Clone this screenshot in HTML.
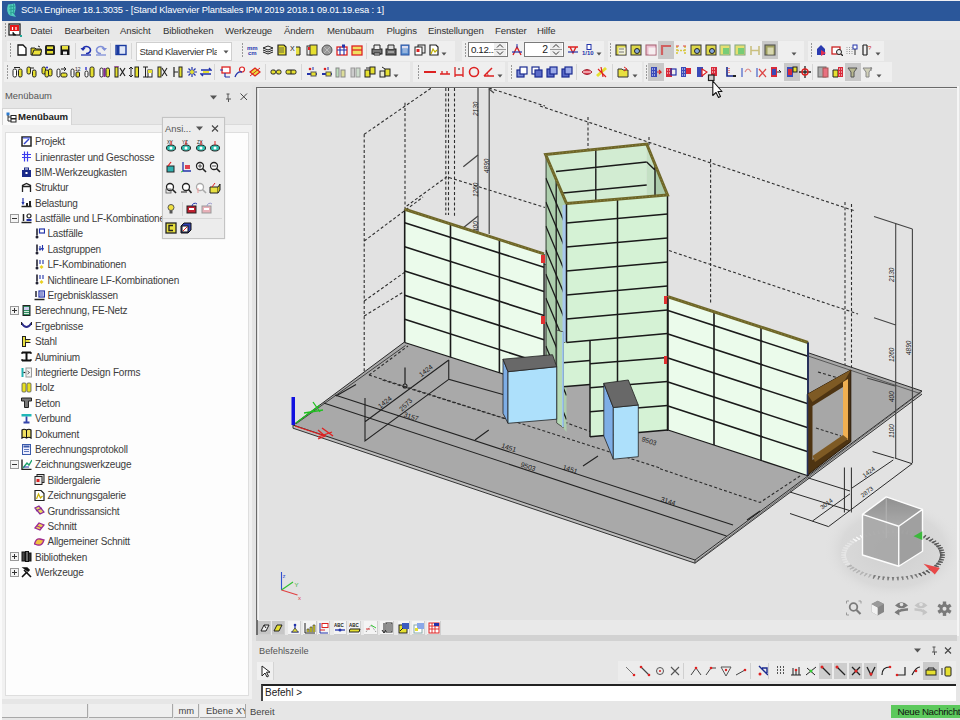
<!DOCTYPE html>
<html><head><meta charset="utf-8"><style>
*{box-sizing:border-box}
html,body{margin:0;padding:0;width:960px;height:720px;overflow:hidden;background:#e6e6e6;font-family:"Liberation Sans",sans-serif;color:#333}
.a{position:absolute}
.tb{background:#efefef;height:20px}
.tt{font-size:10px;letter-spacing:-0.2px;color:#3c3c3c;white-space:nowrap;line-height:12px}
</style></head><body>
<div class="a" style="left:0;top:0;width:960px;height:1px;background:#f0f0f4"></div>
<div class="a" style="left:0;top:0;width:2px;height:720px;background:#fafafa"></div>
<div class="a" style="left:2px;top:1px;width:958px;height:20px;background:#2b579a"></div>
<svg class="a" style="left:4px;top:3px" width="14" height="15" viewBox="0 0 14 15"><path d="M4 1.5 L11 0.5 Q12.5 7 10 11 L12 14 L6 12.5 Q1.5 9 4 1.5Z" fill="#52cdbd"/><path d="M5 4 L11 3 M5 7 L11.5 6 M6 10 L10.5 9 M7 1.5 V12 M9.5 1 V11" stroke="#2a9f92" stroke-width="0.9"/></svg>
<div class="a" style="left:21px;top:4px;font-size:9.4px;letter-spacing:-0.17px;color:#fff;white-space:nowrap;line-height:12px">SCIA Engineer 18.1.3035 - [Stand Klavervier Plantsales IPM 2019 2018.1 09.01.19.esa : 1]</div>
<div class="a" style="left:2px;top:21px;width:958px;height:19px;background:#e8e8e8"></div>
<div class="a" style="left:5px;top:23px;width:1px;height:1.5px;background:#999"></div><div class="a" style="left:5px;top:26px;width:1px;height:1.5px;background:#999"></div><div class="a" style="left:5px;top:29px;width:1px;height:1.5px;background:#999"></div><div class="a" style="left:5px;top:32px;width:1px;height:1.5px;background:#999"></div><div class="a" style="left:5px;top:35px;width:1px;height:1.5px;background:#999"></div>
<svg class="a" style="left:8px;top:23px" width="14" height="15" viewBox="0 0 14 15"><rect x="1" y="1" width="11" height="11" fill="#fff" stroke="#222" stroke-width="1.3"/><rect x="2" y="2" width="9" height="6" fill="#e81818"/><path d="M4.5 4v3M8 4v3" stroke="#fff" stroke-width="1.2"/><path d="M5 9v3h3" stroke="#222"/><rect x="12" y="12" width="2" height="2" fill="#2a9"/></svg>
<div class="a" style="left:30.5px;top:25px;font-size:9.6px;letter-spacing:-0.15px;color:#333;white-space:nowrap;line-height:12px">Datei</div>
<div class="a" style="left:64.5px;top:25px;font-size:9.6px;letter-spacing:-0.15px;color:#333;white-space:nowrap;line-height:12px">Bearbeiten</div>
<div class="a" style="left:120px;top:25px;font-size:9.6px;letter-spacing:-0.15px;color:#333;white-space:nowrap;line-height:12px">Ansicht</div>
<div class="a" style="left:163px;top:25px;font-size:9.6px;letter-spacing:-0.15px;color:#333;white-space:nowrap;line-height:12px">Bibliotheken</div>
<div class="a" style="left:225px;top:25px;font-size:9.6px;letter-spacing:-0.15px;color:#333;white-space:nowrap;line-height:12px">Werkzeuge</div>
<div class="a" style="left:284px;top:25px;font-size:9.6px;letter-spacing:-0.15px;color:#333;white-space:nowrap;line-height:12px">Ändern</div>
<div class="a" style="left:327px;top:25px;font-size:9.6px;letter-spacing:-0.15px;color:#333;white-space:nowrap;line-height:12px">Menübaum</div>
<div class="a" style="left:386.5px;top:25px;font-size:9.6px;letter-spacing:-0.15px;color:#333;white-space:nowrap;line-height:12px">Plugins</div>
<div class="a" style="left:428px;top:25px;font-size:9.6px;letter-spacing:-0.15px;color:#333;white-space:nowrap;line-height:12px">Einstellungen</div>
<div class="a" style="left:495px;top:25px;font-size:9.6px;letter-spacing:-0.15px;color:#333;white-space:nowrap;line-height:12px">Fenster</div>
<div class="a" style="left:537px;top:25px;font-size:9.6px;letter-spacing:-0.15px;color:#333;white-space:nowrap;line-height:12px">Hilfe</div>
<div class="a tb" style="left:7px;top:41px;width:448px"></div>
<div class="a tb" style="left:462px;top:41px;width:142px"></div>
<div class="a tb" style="left:608px;top:41px;width:196px"></div>
<div class="a tb" style="left:808px;top:41px;width:76px"></div>
<div class="a tb" style="left:4px;top:62px;width:406px"></div>
<div class="a tb" style="left:413px;top:62px;width:92px"></div>
<div class="a tb" style="left:508px;top:62px;width:134px"></div>
<div class="a tb" style="left:644px;top:62px;width:248px"></div>
<div class="a" style="left:10px;top:43px;width:1px;height:1.5px;background:#999"></div><div class="a" style="left:10px;top:46px;width:1px;height:1.5px;background:#999"></div><div class="a" style="left:10px;top:49px;width:1px;height:1.5px;background:#999"></div><div class="a" style="left:10px;top:52px;width:1px;height:1.5px;background:#999"></div><div class="a" style="left:10px;top:55px;width:1px;height:1.5px;background:#999"></div>
<svg class="a" style="left:16px;top:44px" width="12" height="12" ><path d="M2 1h5l3 3v7H2z" fill="#fff" stroke="#111" stroke-width="1.3"/></svg>
<svg class="a" style="left:30px;top:44px" width="12" height="12" ><path d="M1 4h4l1 1h5v6H1z" fill="#d9cf1e" stroke="#222"/><path d="M2 11l2-5h8l-2 5z" fill="#ede23a" stroke="#222"/><path d="M8 2l2 1" stroke="#222"/></svg>
<svg class="a" style="left:44px;top:44px" width="12" height="12" ><rect x="1" y="1" width="10" height="10" rx="1.5" fill="#222"/><rect x="3" y="2.5" width="6" height="2.5" fill="#e6e030"/><rect x="3" y="7" width="6" height="2.5" fill="#e6e030"/></svg>
<svg class="a" style="left:59px;top:44px" width="12" height="12" ><rect x="1.5" y="1.5" width="9" height="9.5" fill="#111"/><rect x="3" y="2" width="6" height="3.5" fill="#e8e040"/><rect x="4" y="7.5" width="4" height="3" fill="#eee"/></svg>
<div class="a" style="left:75px;top:43px;width:1px;height:16px;background:#d6d6d6"></div>
<svg class="a" style="left:80px;top:44px" width="12" height="12" ><path d="M2.5 6 A4 3.5 0 1 1 6 9.5" fill="none" stroke="#2030b0" stroke-width="1.6"/><path d="M0.5 4l2.5 3 2.5-3" fill="#2030b0"/><path d="M1 11h10" stroke="#2030b0" stroke-width="1.3"/></svg>
<svg class="a" style="left:95px;top:44px" width="12" height="12" ><path d="M9.5 6 A4 3.5 0 1 0 6 9.5" fill="none" stroke="#8090d8" stroke-width="1.6"/><path d="M6.5 4l3 3 2.5-3" fill="#8090d8"/><path d="M1 11h10" stroke="#8090d8" stroke-width="1.3"/></svg>
<div class="a" style="left:110px;top:43px;width:1px;height:16px;background:#d6d6d6"></div>
<svg class="a" style="left:115px;top:44px" width="12" height="12" ><rect x="1" y="1.5" width="10" height="9" fill="#dfe6f6" stroke="#1a3aa0" stroke-width="1.4"/><rect x="1.5" y="2" width="3" height="8" fill="#1a3aa0"/></svg>
<div class="a" style="left:131px;top:43px;width:1px;height:16px;background:#d6d6d6"></div>
<div class="a" style="left:136px;top:42px;width:96px;height:19px;background:#fff;border:1px solid #cfcfcf;font-size:9.6px;letter-spacing:-0.38px;line-height:17px;padding-left:2.5px;white-space:nowrap;overflow:hidden;color:#333">Stand Klavervier Pla</div>
<div class="a" style="left:217px;top:43px;width:14px;height:17px;background:#fff"></div>
<svg class="a" style="left:223px;top:50px" width="6" height="4" ><path d="M0.5 0.5 L3 3.5 L5.5 0.5Z" fill="#555"/></svg>
<div class="a" style="left:242px;top:43px;width:1px;height:1.5px;background:#999"></div><div class="a" style="left:242px;top:46px;width:1px;height:1.5px;background:#999"></div><div class="a" style="left:242px;top:49px;width:1px;height:1.5px;background:#999"></div><div class="a" style="left:242px;top:52px;width:1px;height:1.5px;background:#999"></div><div class="a" style="left:242px;top:55px;width:1px;height:1.5px;background:#999"></div>
<svg class="a" style="left:247px;top:44px" width="12" height="12" ><text x="0" y="5.5" font-size="6" fill="#2a3ab0" font-family="Liberation Sans" font-weight="bold">mm</text><text x="1" y="11" font-size="6" fill="#2a3ab0" font-family="Liberation Sans" font-weight="bold">cm</text></svg>
<svg class="a" style="left:262px;top:44px" width="12" height="12" ><path d="M1 8l5 2 5-2M1 6l5 2 5-2M1 4l5 2 5-2-5-2z" fill="#eee" stroke="#222"/></svg>
<svg class="a" style="left:276px;top:44px" width="12" height="12" ><path d="M2 1h6l2 2v8H2z" fill="#e6df30" stroke="#222" stroke-width="1.2"/><path d="M3 4h5M3 6h5M3 8h5" stroke="#444" stroke-width="0.8"/></svg>
<svg class="a" style="left:290px;top:44px" width="12" height="12" ><text x="0" y="7" font-size="7" fill="#222" font-family="Liberation Sans">X</text><path d="M6 3h4v8H6" fill="#e8e040" stroke="#222"/></svg>
<svg class="a" style="left:306px;top:44px" width="12" height="12" ><rect x="1" y="2" width="5" height="9" fill="#eee" stroke="#333"/><rect x="4" y="1" width="7" height="10" fill="#e6df30" stroke="#333"/><rect x="2" y="3" width="2" height="3" fill="#d22"/></svg>
<svg class="a" style="left:321px;top:44px" width="12" height="12" ><circle cx="6" cy="6" r="5" fill="#999" stroke="#555"/><path d="M3 3l6 6M3 9l6-6" stroke="#bbb"/></svg>
<svg class="a" style="left:336px;top:44px" width="12" height="12" ><rect x="1" y="3" width="10" height="8" fill="#fff" stroke="#d22" stroke-width="1.3"/><path d="M1 6h10M4 3v8M8 3v8" stroke="#2233aa" stroke-width="1.1"/><rect x="6" y="0.5" width="3" height="3" fill="#2233aa"/></svg>
<svg class="a" style="left:351px;top:44px" width="12" height="12" ><rect x="1" y="2" width="10" height="9" fill="#f0e060" stroke="#d22" stroke-width="1.3"/><path d="M1 6h10" stroke="#d22" stroke-width="1.3"/></svg>
<div class="a" style="left:366px;top:43px;width:1px;height:16px;background:#d6d6d6"></div>
<svg class="a" style="left:371px;top:44px" width="12" height="12" ><rect x="1" y="5" width="10" height="5" fill="#777" stroke="#222"/><path d="M3 5V1h6v4M3 9h6v2H3z" fill="#eee" stroke="#222"/></svg>
<svg class="a" style="left:385px;top:44px" width="12" height="12" ><rect x="1" y="5" width="10" height="6" fill="#666" stroke="#222"/><path d="M3 5V1h6v4" fill="#ddd" stroke="#222"/><path d="M3 8h6" stroke="#ddd"/></svg>
<svg class="a" style="left:399px;top:44px" width="12" height="12" ><rect x="2" y="1" width="8" height="10" fill="#5a90d0" stroke="#2a50a0"/><rect x="3" y="2" width="6" height="2.5" fill="#dde"/><path d="M3.5 6h5M3.5 8h5" stroke="#dde" stroke-width="0.9"/></svg>
<svg class="a" style="left:414px;top:44px" width="12" height="12" ><rect x="4" y="1" width="7" height="8" fill="#eee" stroke="#222"/><rect x="1" y="3" width="7" height="8" fill="#fff" stroke="#222"/><rect x="2.5" y="5" width="3" height="3" fill="#d22"/></svg>
<svg class="a" style="left:428px;top:44px" width="12" height="12" ><path d="M2 1h6l2 2v8H2z" fill="#fff" stroke="#222" stroke-width="1.2"/><path d="M3 10l2-5 2 3 2-2" stroke="#c0b000" stroke-width="1.2" fill="none"/></svg>
<svg class="a" style="left:441px;top:52px" width="6" height="4" ><path d="M0.5 0.5 L3 3.5 L5.5 0.5Z" fill="#555"/></svg>
<div class="a" style="left:465px;top:43px;width:1px;height:1.5px;background:#999"></div><div class="a" style="left:465px;top:46px;width:1px;height:1.5px;background:#999"></div><div class="a" style="left:465px;top:49px;width:1px;height:1.5px;background:#999"></div><div class="a" style="left:465px;top:52px;width:1px;height:1.5px;background:#999"></div><div class="a" style="left:465px;top:55px;width:1px;height:1.5px;background:#999"></div>
<div class="a" style="left:468px;top:42px;width:40px;height:15px;background:#fff;border:1px solid #7a7a7a;font-size:9.8px;line-height:13px;padding-left:2px;color:#222;letter-spacing:-0.4px;white-space:nowrap">0.12...</div>
<svg class="a" style="left:494px;top:43px" width="12" height="13" ><rect x="0" y="0" width="12" height="13" fill="#eee"/><path d="M3 4.5l3-3 3 3M3 8.5l3 3 3-3" stroke="#333" fill="none"/><path d="M0 6.5h12" stroke="#999"/></svg>
<svg class="a" style="left:511px;top:44px" width="12" height="12" ><path d="M2 11L6 3l4 8" fill="none" stroke="#d22" stroke-width="1.4"/><path d="M1 8h10" stroke="#2233aa" stroke-width="1.2"/><path d="M6 0v4" stroke="#2233aa"/></svg>
<div class="a" style="left:524px;top:42px;width:40px;height:15px;background:#fff;border:1px solid #7a7a7a;font-size:10.4px;line-height:13px;padding-right:15px;text-align:right;color:#222">2</div>
<svg class="a" style="left:550px;top:43px" width="12" height="13" ><rect x="0" y="0" width="12" height="13" fill="#eee"/><path d="M3 4.5l3-3 3 3M3 8.5l3 3 3-3" stroke="#333" fill="none"/><path d="M0 6.5h12" stroke="#999"/></svg>
<svg class="a" style="left:567px;top:44px" width="12" height="12" ><path d="M1 3h10M3 3l3 6 3-6" fill="none" stroke="#d22" stroke-width="1.4"/><path d="M1 8h10" stroke="#2233aa" stroke-width="1.2"/></svg>
<svg class="a" style="left:582px;top:44px" width="12" height="12" ><text x="0" y="11" font-size="6" fill="#2233aa" font-family="Liberation Sans" font-weight="bold">1/10</text><rect x="5" y="0.5" width="4" height="5" fill="#fff" stroke="#2233aa"/></svg>
<svg class="a" style="left:596px;top:52px" width="6" height="4" ><path d="M0.5 0.5 L3 3.5 L5.5 0.5Z" fill="#555"/></svg>
<div class="a" style="left:610px;top:43px;width:1px;height:1.5px;background:#999"></div><div class="a" style="left:610px;top:46px;width:1px;height:1.5px;background:#999"></div><div class="a" style="left:610px;top:49px;width:1px;height:1.5px;background:#999"></div><div class="a" style="left:610px;top:52px;width:1px;height:1.5px;background:#999"></div><div class="a" style="left:610px;top:55px;width:1px;height:1.5px;background:#999"></div>
<svg class="a" style="left:615px;top:44px" width="12" height="12" ><rect x="1" y="1" width="10" height="10" fill="#ddd84a" stroke="#333" stroke-width="1.1"/><rect x="3.5" y="3.5" width="7" height="7" fill="#f2f2e0"/><path d="M4 5h5M4 8h5" stroke="#555" stroke-width="0.8"/></svg>
<svg class="a" style="left:630px;top:44px" width="12" height="12" ><rect x="1" y="1" width="10" height="10" fill="#ddd84a" stroke="#333"/><circle cx="7" cy="7" r="2.5" fill="#8ad" stroke="#222"/></svg>
<svg class="a" style="left:645px;top:44px" width="12" height="12" ><rect x="1" y="1" width="10" height="10" fill="#ecc0d0" stroke="#a67" stroke-width="1.1"/><rect x="3.5" y="3.5" width="7" height="7" fill="#f6eef0"/></svg>
<div class="a" style="left:658px;top:41px;width:16px;height:18px;background:#c8c8c8"></div><svg class="a" style="left:660px;top:44px" width="12" height="12" ><path d="M2 11V2h9" fill="none" stroke="#d06060" stroke-width="2.2"/></svg>
<svg class="a" style="left:675px;top:44px" width="12" height="12" ><path d="M2 2v9M10 2v9M2 6.5h8" fill="none" stroke="#d8c840" stroke-width="1.6" stroke-dasharray="2,1"/><path d="M1 2h3M8 2h3" stroke="#d44"/></svg>
<svg class="a" style="left:690px;top:44px" width="12" height="12" ><rect x="1" y="1" width="10" height="10" fill="#ddd84a" stroke="#333"/><circle cx="7" cy="7" r="2.5" fill="#8ad" stroke="#222"/></svg>
<svg class="a" style="left:705px;top:44px" width="12" height="12" ><rect x="1" y="1" width="10" height="10" fill="#ddd84a" stroke="#333"/><circle cx="7" cy="7" r="2.5" fill="#8ad" stroke="#222"/></svg>
<svg class="a" style="left:719px;top:44px" width="12" height="12" ><rect x="1" y="1" width="10" height="10" fill="#e4e070" stroke="#8a8" stroke-width="1.1"/><rect x="4" y="4" width="6" height="6" fill="#7c7" /></svg>
<svg class="a" style="left:734px;top:44px" width="12" height="12" ><rect x="1" y="1" width="10" height="10" fill="#e4e070" stroke="#8a8" stroke-width="1.1"/><rect x="4" y="4" width="6" height="6" fill="#7c7" /></svg>
<svg class="a" style="left:749px;top:44px" width="12" height="12" ><path d="M2 2v9M10 2v9M2 6.5h8" fill="none" stroke="#cac080" stroke-width="1.6"/></svg>
<div class="a" style="left:762px;top:41px;width:16px;height:18px;background:#c8c8c8"></div><svg class="a" style="left:764px;top:44px" width="12" height="12" ><rect x="1" y="1" width="10" height="10" fill="#a0a060" stroke="#555" stroke-width="1.1"/><rect x="3.5" y="3.5" width="6" height="7" fill="#d8d8b0"/></svg>
<svg class="a" style="left:791px;top:52px" width="6" height="4" ><path d="M0.5 0.5 L3 3.5 L5.5 0.5Z" fill="#555"/></svg>
<div class="a" style="left:811px;top:43px;width:1px;height:1.5px;background:#999"></div><div class="a" style="left:811px;top:46px;width:1px;height:1.5px;background:#999"></div><div class="a" style="left:811px;top:49px;width:1px;height:1.5px;background:#999"></div><div class="a" style="left:811px;top:52px;width:1px;height:1.5px;background:#999"></div><div class="a" style="left:811px;top:55px;width:1px;height:1.5px;background:#999"></div>
<svg class="a" style="left:815px;top:44px" width="12" height="12" ><path d="M2 5l4-4 4 4v6H2z" fill="#2a3ab0"/><path d="M6 6l5 3-5 3z" fill="#e03050"/></svg>
<svg class="a" style="left:831px;top:44px" width="12" height="12" ><rect x="1" y="3" width="8" height="7" fill="#fff" stroke="#c22" stroke-width="1.3"/><circle cx="8" cy="8" r="2.5" fill="#eee" stroke="#222"/><path d="M10 10l2 2" stroke="#222" stroke-width="1.3"/></svg>
<svg class="a" style="left:846px;top:44px" width="12" height="12" ><path d="M1 3v8M3.5 3v8M6 3v8" stroke="#999" stroke-dasharray="1,1"/><rect x="7" y="1" width="4" height="4" fill="#fff" stroke="#2233aa"/><path d="M9 5v6" stroke="#333"/></svg>
<svg class="a" style="left:861px;top:44px" width="12" height="12" ><path d="M2 1v10M6 1v10M2 1h4M2 11h4" stroke="#222" stroke-width="1.2"/><text x="7" y="6" font-size="6" fill="#c22" font-family="Liberation Sans">?</text></svg>
<svg class="a" style="left:875px;top:52px" width="6" height="4" ><path d="M0.5 0.5 L3 3.5 L5.5 0.5Z" fill="#555"/></svg>
<div class="a" style="left:7px;top:65px;width:1px;height:1.5px;background:#999"></div><div class="a" style="left:7px;top:68px;width:1px;height:1.5px;background:#999"></div><div class="a" style="left:7px;top:71px;width:1px;height:1.5px;background:#999"></div><div class="a" style="left:7px;top:74px;width:1px;height:1.5px;background:#999"></div><div class="a" style="left:7px;top:77px;width:1px;height:1.5px;background:#999"></div>
<svg class="a" style="left:12px;top:66px" width="12" height="12" ><rect x="1" y="3" width="3.5" height="8" rx="1.5" fill="#fff" stroke="#222"/><rect x="6.5" y="3" width="3.5" height="8" rx="1.5" fill="#e6e030" stroke="#222"/><path d="M2 1.5h6" stroke="#222"/></svg>
<svg class="a" style="left:26px;top:66px" width="12" height="12" ><rect x="1" y="1" width="3.5" height="7" rx="1.5" fill="#e6e030" stroke="#222"/><rect x="6.5" y="4" width="3.5" height="7" rx="1.5" fill="#e6e030" stroke="#222"/><path d="M4 2h4" stroke="#222"/></svg>
<svg class="a" style="left:41px;top:66px" width="12" height="12" ><rect x="1" y="1" width="3.5" height="7" rx="1.5" fill="#e6e030" stroke="#222"/><rect x="4" y="4" width="3.5" height="7" rx="1.5" fill="#e6e030" stroke="#222"/><rect x="7.5" y="3" width="3.5" height="7" rx="1.5" fill="#e6e030" stroke="#222"/><circle cx="6" cy="1.5" r="1" fill="#22c"/></svg>
<svg class="a" style="left:56px;top:66px" width="12" height="12" ><rect x="1" y="3" width="3" height="8" rx="1.5" fill="#fff" stroke="#222"/><rect x="5" y="7" width="6" height="4" rx="1.5" fill="#e6e030" stroke="#222"/><path d="M5 3h5l-2-2M10 3l-2 2" stroke="#222" fill="none"/></svg>
<svg class="a" style="left:70px;top:66px" width="12" height="12" ><rect x="1" y="3" width="3" height="8" rx="1.5" fill="#fff" stroke="#222"/><rect x="6" y="6" width="3.5" height="5" rx="1" fill="#e6e030" stroke="#222"/><text x="5" y="5" font-size="5" fill="#222" font-family="Liberation Sans">12</text></svg>
<svg class="a" style="left:84px;top:66px" width="12" height="12" ><rect x="1" y="5" width="3" height="6" rx="1.5" fill="#fff" stroke="#222"/><rect x="6" y="1" width="4" height="10" rx="1.5" fill="#e6e030" stroke="#222"/><path d="M2 1v3" stroke="#22c" stroke-width="1.3"/></svg>
<svg class="a" style="left:99px;top:66px" width="12" height="12" ><rect x="1" y="2" width="3" height="9" rx="1.5" fill="#fff" stroke="#222"/><rect x="4.5" y="2" width="2" height="9" fill="#8a2a9a"/><rect x="7" y="2" width="3.5" height="9" rx="1.5" fill="#e6e030" stroke="#222"/></svg>
<svg class="a" style="left:114px;top:66px" width="12" height="12" ><rect x="1" y="1" width="3" height="10" fill="#e6e030" stroke="#222"/><path d="M6 2l5 8M11 2l-5 8" stroke="#222" stroke-width="1.2"/><path d="M0 0h5" stroke="#a2a"/></svg>
<svg class="a" style="left:128px;top:66px" width="12" height="12" ><path d="M3 1v10M1 3l2-2 2 2M1 9l2 2 2-2" stroke="#222" fill="none"/><rect x="7" y="1" width="3.5" height="10" fill="#e6e030" stroke="#222"/></svg>
<svg class="a" style="left:142px;top:66px" width="12" height="12" ><path d="M1 1h5M3.5 1v10M1 11h5" stroke="#222"/><rect x="6" y="4" width="4" height="7" fill="#fff" stroke="#222"/><rect x="6" y="4" width="4" height="3" fill="#e6e030"/></svg>
<svg class="a" style="left:157px;top:66px" width="12" height="12" ><rect x="1" y="1" width="3" height="10" fill="#e6e030" stroke="#222"/><path d="M5 2l5 8M10 2l-5 8" stroke="#222" stroke-width="1.1"/></svg>
<svg class="a" style="left:172px;top:66px" width="12" height="12" ><path d="M2 1v10M2 6h4" stroke="#222" stroke-width="1.2"/><rect x="7" y="1" width="3" height="10" fill="#e6e030" stroke="#222"/></svg>
<svg class="a" style="left:186px;top:66px" width="12" height="12" ><path d="M6 1v10M1 6h10M2.5 2.5l7 7M9.5 2.5l-7 7" stroke="#2233aa" stroke-width="1.2"/><circle cx="6" cy="6" r="2" fill="#e6e030"/></svg>
<svg class="a" style="left:200px;top:66px" width="12" height="12" ><path d="M1 4h10l-2-2M11 8H1l2 2" stroke="#2233aa" stroke-width="1.4" fill="none"/><rect x="3" y="5" width="6" height="2" fill="#e6e030"/></svg>
<div class="a" style="left:214px;top:64px;width:1px;height:16px;background:#d6d6d6"></div>
<svg class="a" style="left:219px;top:66px" width="12" height="12" ><rect x="3" y="1" width="8" height="6" fill="#fff" stroke="#d22" stroke-width="1.3"/><path d="M1 4h3M6 7v4M6 11h5" stroke="#2233aa" stroke-width="1.2"/></svg>
<svg class="a" style="left:234px;top:66px" width="12" height="12" ><circle cx="8" cy="3.5" r="2.5" fill="#fff" stroke="#d22" stroke-width="1.2"/><path d="M1 11Q3 5 8 6" stroke="#2233aa" stroke-width="1.3" fill="none"/></svg>
<svg class="a" style="left:249px;top:66px" width="12" height="12" ><path d="M1 6l5-4 5 4-5 4z" fill="#e8e040" stroke="#d22" stroke-width="1.3"/><path d="M1 10L11 2" stroke="#d22"/></svg>
<div class="a" style="left:265px;top:64px;width:1px;height:16px;background:#d6d6d6"></div>
<svg class="a" style="left:270px;top:66px" width="12" height="12" ><rect x="1" y="4" width="4.5" height="4" rx="1.5" fill="#e6e030" stroke="#222"/><rect x="6.5" y="4" width="4.5" height="4" rx="1.5" fill="#e6e030" stroke="#222"/></svg>
<svg class="a" style="left:285px;top:66px" width="12" height="12" ><rect x="1" y="4" width="10" height="4" rx="1.5" fill="#e6e030" stroke="#222"/><path d="M6 4v4" stroke="#222"/></svg>
<div class="a" style="left:301px;top:64px;width:1px;height:16px;background:#d6d6d6"></div>
<svg class="a" style="left:306px;top:66px" width="12" height="12" ><circle cx="4" cy="3" r="1.3" fill="#d22"/><path d="M1 8h10" stroke="#2233aa" stroke-width="2"/><rect x="5" y="6" width="5" height="4" fill="#e6e030" stroke="#555"/><path d="M7 1v3" stroke="#2233aa"/></svg>
<svg class="a" style="left:321px;top:66px" width="12" height="12" ><circle cx="4" cy="3" r="1.3" fill="#d22"/><path d="M1 8h10" stroke="#2233aa" stroke-width="2"/><rect x="5" y="6" width="5" height="4" fill="#e6e030" stroke="#555"/><path d="M7 1v3" stroke="#2233aa"/></svg>
<svg class="a" style="left:335px;top:66px" width="12" height="12" ><rect x="1" y="2" width="3" height="9" fill="#bdb" stroke="#888"/><rect x="6" y="4" width="4" height="7" fill="#dd9" stroke="#888"/></svg>
<svg class="a" style="left:350px;top:66px" width="12" height="12" ><rect x="1" y="2" width="3.5" height="9" fill="#ccc" stroke="#999"/><rect x="6" y="2" width="4" height="9" fill="#cdc" stroke="#999"/></svg>
<svg class="a" style="left:364px;top:66px" width="12" height="12" ><rect x="1" y="4" width="5" height="7" fill="#e6e030" stroke="#222"/><rect x="6" y="1" width="5" height="7" fill="#e6e030" stroke="#222"/><path d="M2 2h4" stroke="#222"/></svg>
<svg class="a" style="left:379px;top:66px" width="12" height="12" ><rect x="1" y="5" width="5" height="6" fill="#e8e8d0" stroke="#222"/><rect x="6" y="3" width="5" height="7" fill="#e6e030" stroke="#222"/><path d="M3 1l3 2" stroke="#222"/></svg>
<svg class="a" style="left:393px;top:74px" width="6" height="4" ><path d="M0.5 0.5 L3 3.5 L5.5 0.5Z" fill="#555"/></svg>
<div class="a" style="left:418px;top:65px;width:1px;height:1.5px;background:#999"></div><div class="a" style="left:418px;top:68px;width:1px;height:1.5px;background:#999"></div><div class="a" style="left:418px;top:71px;width:1px;height:1.5px;background:#999"></div><div class="a" style="left:418px;top:74px;width:1px;height:1.5px;background:#999"></div><div class="a" style="left:418px;top:77px;width:1px;height:1.5px;background:#999"></div>
<svg class="a" style="left:424px;top:66px" width="12" height="12" ><path d="M0 6h12" stroke="#d22" stroke-width="2"/></svg>
<svg class="a" style="left:439px;top:66px" width="12" height="12" ><path d="M1 8h10M3 5v3M8 5v3" stroke="#d22" stroke-width="1.3"/></svg>
<svg class="a" style="left:453px;top:66px" width="12" height="12" ><path d="M2 1v10M10 1v10M2 9h8" stroke="#d22" stroke-width="1.3"/><path d="M5 3h2" stroke="#222"/></svg>
<svg class="a" style="left:468px;top:66px" width="12" height="12" ><circle cx="6" cy="6" r="4.5" fill="none" stroke="#d22" stroke-width="1.6"/></svg>
<svg class="a" style="left:483px;top:66px" width="12" height="12" ><path d="M1 10h10M1 10l8-8" stroke="#d22" stroke-width="1.5"/><path d="M5 10a4 4 0 0 0-1-3" stroke="#d22" fill="none"/></svg>
<svg class="a" style="left:497px;top:74px" width="6" height="4" ><path d="M0.5 0.5 L3 3.5 L5.5 0.5Z" fill="#555"/></svg>
<div class="a" style="left:511px;top:65px;width:1px;height:1.5px;background:#999"></div><div class="a" style="left:511px;top:68px;width:1px;height:1.5px;background:#999"></div><div class="a" style="left:511px;top:71px;width:1px;height:1.5px;background:#999"></div><div class="a" style="left:511px;top:74px;width:1px;height:1.5px;background:#999"></div><div class="a" style="left:511px;top:77px;width:1px;height:1.5px;background:#999"></div>
<svg class="a" style="left:516px;top:66px" width="12" height="12" ><rect x="1" y="4" width="7" height="7" fill="#7a8ad8" stroke="#1a2a90" stroke-width="1.2"/><rect x="4" y="1" width="7" height="7" fill="#fff" stroke="#1a2a90" stroke-width="1.2"/></svg>
<svg class="a" style="left:531px;top:66px" width="12" height="12" ><rect x="1" y="1" width="7" height="7" fill="#fff" stroke="#1a2a90" stroke-width="1.2"/><rect x="4" y="4" width="7" height="7" fill="#5a6ac8" stroke="#1a2a90" stroke-width="1.2"/></svg>
<svg class="a" style="left:546px;top:66px" width="12" height="12" ><rect x="1" y="3" width="7" height="8" fill="#5a6ac8" stroke="#1a2a90" stroke-width="1.2"/><rect x="4" y="1" width="7" height="7" fill="#9aa8e8" stroke="#1a2a90" stroke-width="1.2"/></svg>
<svg class="a" style="left:561px;top:66px" width="12" height="12" ><rect x="1" y="3" width="7" height="8" fill="#5a6ac8" stroke="#1a2a90" stroke-width="1.2"/><rect x="4" y="1" width="7" height="7" fill="#9aa8e8" stroke="#1a2a90" stroke-width="1.2"/></svg>
<div class="a" style="left:576px;top:64px;width:1px;height:16px;background:#d6d6d6"></div>
<svg class="a" style="left:581px;top:66px" width="12" height="12" ><path d="M1 6Q6 1 11 6Q6 11 1 6z" fill="#e04050" stroke="#a02030"/><path d="M2 6h8" stroke="#fff"/></svg>
<svg class="a" style="left:596px;top:66px" width="12" height="12" ><path d="M1 10L10 2" stroke="#e6e030" stroke-width="3"/><path d="M2 3l8 8M5 1l2 10" stroke="#d22" stroke-width="1.2"/></svg>
<div class="a" style="left:612px;top:64px;width:1px;height:16px;background:#d6d6d6"></div>
<svg class="a" style="left:617px;top:66px" width="12" height="12" ><path d="M1 3h4l1 1h5v7H1z" fill="#e8e040" stroke="#333"/><path d="M7 1l3 2-3 2" stroke="#d22" fill="none"/></svg>
<svg class="a" style="left:632px;top:74px" width="6" height="4" ><path d="M0.5 0.5 L3 3.5 L5.5 0.5Z" fill="#555"/></svg>
<div class="a" style="left:646px;top:65px;width:1px;height:1.5px;background:#999"></div><div class="a" style="left:646px;top:68px;width:1px;height:1.5px;background:#999"></div><div class="a" style="left:646px;top:71px;width:1px;height:1.5px;background:#999"></div><div class="a" style="left:646px;top:74px;width:1px;height:1.5px;background:#999"></div><div class="a" style="left:646px;top:77px;width:1px;height:1.5px;background:#999"></div>
<div class="a" style="left:648px;top:63px;width:16px;height:18px;background:#c8c8c8"></div><svg class="a" style="left:650px;top:66px" width="12" height="12" ><rect x="1" y="1" width="6" height="10" fill="#3a4ab8"/><path d="M2 3h4M2 6h4M2 9h4" stroke="#fff" stroke-dasharray="1,1"/><path d="M7 6h4l-2-2M11 6l-2 2" stroke="#d22" fill="none" stroke-width="1.2"/></svg>
<svg class="a" style="left:665px;top:66px" width="12" height="12" ><rect x="1" y="2" width="6" height="9" fill="#d82a3a"/><path d="M2 4h4M2 7h4" stroke="#fff" stroke-dasharray="1,1"/><rect x="6" y="3" width="5" height="6" fill="none" stroke="#2233aa" stroke-width="1.2"/></svg>
<svg class="a" style="left:680px;top:66px" width="12" height="12" ><rect x="1" y="1" width="5" height="10" fill="#3a4ab8"/><rect x="6" y="2" width="5" height="6" fill="#d82a3a"/><path d="M2 3h3M2 6h3M2 9h3" stroke="#fff" stroke-dasharray="1,1"/></svg>
<svg class="a" style="left:696px;top:66px" width="12" height="12" ><rect x="1" y="1" width="6" height="10" fill="#3a4ab8"/><path d="M6 3l5 3-5 4z" fill="#fff" stroke="#d22" stroke-width="1.2"/></svg>
<svg class="a" style="left:709px;top:66px" width="12" height="12" ><rect x="2" y="1" width="6" height="9" fill="#d82a3a"/><path d="M3 3h4M3 6h4" stroke="#fff" stroke-dasharray="1,1"/></svg>
<svg class="a" style="left:725px;top:66px" width="12" height="12" ><path d="M2 1v9h7" stroke="#1a2a90" stroke-width="1.6" fill="none"/><path d="M4 2v5" stroke="#d22" stroke-dasharray="1,1"/><rect x="8" y="9" width="3" height="2" fill="#222"/></svg>
<svg class="a" style="left:740px;top:66px" width="12" height="12" ><path d="M2 2v9" stroke="#8a9ad8" stroke-width="2"/><path d="M5 6q3-6 6 0" stroke="#d88" fill="none" stroke-width="1.2"/></svg>
<svg class="a" style="left:755px;top:66px" width="12" height="12" ><path d="M2 2v9" stroke="#8a9ad8" stroke-width="2"/><path d="M4 3l7 8M11 3L4 11" stroke="#d44" stroke-width="1.2"/></svg>
<svg class="a" style="left:770px;top:66px" width="12" height="12" ><rect x="1" y="1" width="6" height="10" fill="#d82a3a"/><rect x="2" y="3" width="4" height="6" fill="#3a4ab8"/><path d="M7 6h4l-2-2" stroke="#222" fill="none"/></svg>
<div class="a" style="left:784px;top:63px;width:16px;height:18px;background:#c8c8c8"></div><svg class="a" style="left:786px;top:66px" width="12" height="12" ><rect x="1" y="1" width="6" height="10" fill="#3a4ab8"/><rect x="2" y="3" width="4" height="6" fill="#d82a3a"/><rect x="7" y="1" width="4" height="5" fill="#e6e030" stroke="#222"/></svg>
<svg class="a" style="left:799px;top:66px" width="12" height="12" ><path d="M6 0v12M0 6h12" stroke="#222" stroke-width="1.3"/><circle cx="6" cy="6" r="3" fill="none" stroke="#d22" stroke-width="1.4"/></svg>
<div class="a" style="left:812px;top:64px;width:1px;height:16px;background:#d6d6d6"></div>
<svg class="a" style="left:817px;top:66px" width="12" height="12" ><rect x="1" y="1" width="8" height="10" fill="#aaa" stroke="#666"/><rect x="6" y="2" width="5" height="9" fill="#e87080" stroke="#a55"/></svg>
<svg class="a" style="left:832px;top:66px" width="12" height="12" ><path d="M1 4h5v7H1z" fill="#e6e030" stroke="#222"/><rect x="6" y="1" width="5" height="10" fill="#d82a3a"/><path d="M7 3h3M7 6h3M7 9h3" stroke="#fff" stroke-dasharray="1,1"/></svg>
<div class="a" style="left:845px;top:63px;width:16px;height:18px;background:#c8c8c8"></div><svg class="a" style="left:847px;top:66px" width="12" height="12" ><path d="M1 2h9l-3 4v5H4V6z" fill="#b8b890" stroke="#555"/></svg>
<svg class="a" style="left:862px;top:66px" width="12" height="12" ><path d="M1 2h9l-3 4v5H4V6z" fill="#d0d0b8" stroke="#888"/><path d="M9 1v4" stroke="#888"/></svg>
<svg class="a" style="left:876px;top:74px" width="6" height="4" ><path d="M0.5 0.5 L3 3.5 L5.5 0.5Z" fill="#555"/></svg>
<div class="a" style="left:5px;top:90px;font-size:9.4px;color:#555;line-height:12px">Menübaum</div>
<svg class="a" style="left:208px;top:93px" width="40" height="10"><path d="M2 2.5h7l-3.5 4z" fill="#555"/><path d="M20 1v5M18.5 1h3M18 6h5M20.5 6v3" stroke="#555" stroke-width="1"/><path d="M32.5 0.5l6.5 6.5M39 0.5l-6.5 6.5" stroke="#444" stroke-width="1"/></svg>
<div class="a" style="left:2px;top:124px;width:250px;height:575px;background:#f1f1f1;border-top:1px solid #dadada"></div>
<div class="a" style="left:2px;top:108px;width:70px;height:17px;background:#f9f9f9;border:1px solid #d4d4d4;border-bottom:none"></div>
<svg class="a" style="left:6px;top:112px" width="11" height="11"><rect x="0.5" y="0.5" width="3" height="3" fill="#2a7ad0"/><path d="M2 3v6h3M2 5h3" stroke="#333" fill="none"/><rect x="5" y="3.5" width="5" height="3" fill="#fff" stroke="#222"/><rect x="5" y="7" width="5" height="3" fill="#fff" stroke="#222"/></svg>
<div class="a" style="left:18px;top:111px;font-size:9.6px;font-weight:bold;color:#222;line-height:12px;letter-spacing:-0.1px">Menübaum</div>
<div class="a" style="left:5px;top:132px;width:244px;height:564px;background:#fdfdfd;border:1px solid #dedede"></div>
<svg class="a" style="left:21.0px;top:135.8px" width="11" height="11"><rect x="1" y="1" width="9" height="9" fill="#fff" stroke="#222" stroke-width="1.5"/><path d="M3 8 L8 3" stroke="#3344cc" stroke-width="1.5"/><path d="M2 2h7" stroke="#5566ee" stroke-width="1.2"/></svg>
<div class="a tt" style="left:35.0px;top:136.1px">Projekt</div>
<svg class="a" style="left:21.0px;top:151.2px" width="11" height="11"><path d="M3.5 0.5v10M6.5 0.5v10M1 3.5h9M1 6.5h9" stroke="#3a3aee" stroke-width="1.2"/></svg>
<div class="a tt" style="left:35.0px;top:151.5px">Linienraster und Geschosse</div>
<svg class="a" style="left:21.0px;top:166.6px" width="11" height="11"><rect x="1" y="3" width="9" height="7" fill="#1a2a8a"/><rect x="3.5" y="1" width="4" height="2" fill="none" stroke="#1a2a8a"/><rect x="4.5" y="5" width="2" height="2" fill="#fff"/></svg>
<div class="a tt" style="left:35.0px;top:166.9px">BIM-Werkzeugkasten</div>
<svg class="a" style="left:21.0px;top:182.0px" width="11" height="11"><path d="M1.5 10V3.5L5.5 1.5L9.5 3.5V10M1.5 4.5h8" fill="none" stroke="#222" stroke-width="1.3"/></svg>
<div class="a tt" style="left:35.0px;top:182.3px">Struktur</div>
<svg class="a" style="left:21.0px;top:197.4px" width="11" height="11"><path d="M2 1v6M1 5l1 2 1-2" stroke="#2233aa" stroke-width="1.2" fill="none"/><path d="M0.5 9.5h10" stroke="#222" stroke-width="1.5"/><path d="M5 9V6h2v3M8 9V4h2v5" fill="#222"/></svg>
<div class="a tt" style="left:35.0px;top:197.7px">Belastung</div>
<svg class="a" style="left:10px;top:213.8px" width="9" height="9"><rect x="0.5" y="0.5" width="8" height="8" fill="#f4f4f4" stroke="#999"/><path d="M2 4.5h5" stroke="#333"/></svg>
<svg class="a" style="left:21.0px;top:212.8px" width="11" height="11"><path d="M2.5 1v7" stroke="#222" stroke-width="1.5"/><path d="M0.5 9.5h10" stroke="#222" stroke-width="1.5"/><circle cx="8" cy="3" r="2" fill="none" stroke="#222" stroke-width="1.2"/><rect x="5.5" y="6" width="5" height="2" fill="#2233aa"/></svg>
<div class="a tt" style="left:35.0px;top:213.1px">Lastfälle und LF-Kombinationen</div>
<svg class="a" style="left:33.5px;top:228.1px" width="11" height="11"><path d="M3 0.5v7" stroke="#223" stroke-width="1.6"/><circle cx="3" cy="9" r="1.5" fill="#223"/><rect x="5.5" y="1" width="5" height="4" fill="#fff" stroke="#2233aa" stroke-width="1.2"/></svg>
<div class="a tt" style="left:47.5px;top:228.4px">Lastfälle</div>
<svg class="a" style="left:33.5px;top:243.5px" width="11" height="11"><path d="M3 0.5v7" stroke="#223" stroke-width="1.6"/><circle cx="3" cy="9" r="1.5" fill="#223"/><path d="M6 2v4M8.5 1v5M5 4.5l1 1.5 1-1.5M7.5 4l1 2 1-2" stroke="#2233aa" stroke-width="1.1" fill="none"/></svg>
<div class="a tt" style="left:47.5px;top:243.8px">Lastgruppen</div>
<svg class="a" style="left:33.5px;top:258.9px" width="11" height="11"><path d="M3 0.5v7" stroke="#223" stroke-width="1.6"/><circle cx="3" cy="9" r="1.5" fill="#223"/><path d="M6 1v4M9 1v4" stroke="#2233aa" stroke-width="1.1"/><path d="M7.5 6l2 2-2 2-2-2z" fill="#e8d020"/></svg>
<div class="a tt" style="left:47.5px;top:259.2px">LF-Kombinationen</div>
<svg class="a" style="left:33.5px;top:274.3px" width="11" height="11"><path d="M3 0.5v7" stroke="#223" stroke-width="1.6"/><circle cx="3" cy="9" r="1.5" fill="#223"/><path d="M6 1v4M9 1v4" stroke="#2233aa" stroke-width="1.1"/><path d="M7.5 6l2 2-2 2-2-2z" fill="#e8d020"/></svg>
<div class="a tt" style="left:47.5px;top:274.6px">Nichtlineare LF-Kombinationen</div>
<svg class="a" style="left:33.5px;top:289.7px" width="11" height="11"><path d="M2 1v6" stroke="#223" stroke-width="1.5"/><path d="M0.5 9.5h10" stroke="#222" stroke-width="1.5"/><rect x="5" y="1" width="5.5" height="6" fill="#fff" stroke="#2233aa" stroke-width="1.2"/><path d="M6 3h3.5M6 5h3.5" stroke="#2233aa"/></svg>
<div class="a tt" style="left:47.5px;top:290.0px">Ergebnisklassen</div>
<svg class="a" style="left:10px;top:306.1px" width="9" height="9"><rect x="0.5" y="0.5" width="8" height="8" fill="#f4f4f4" stroke="#999"/><path d="M2 4.5h5" stroke="#333"/><path d="M4.5 2v5" stroke="#333"/></svg>
<svg class="a" style="left:21.0px;top:305.1px" width="11" height="11"><rect x="2" y="0.5" width="7" height="10" fill="#2f8f5f" stroke="#222"/><rect x="3" y="2" width="5" height="3" fill="#cce"/><path d="M3 6.5h5M3 8.5h5" stroke="#fff" stroke-width="0.8"/></svg>
<div class="a tt" style="left:35.0px;top:305.4px">Berechnung, FE-Netz</div>
<svg class="a" style="left:21.0px;top:320.5px" width="11" height="11"><path d="M0.5 2 Q5.5 10 10.5 2" fill="none" stroke="#2a2a8a" stroke-width="1.8"/><path d="M0.5 1v3M10.5 1v3" stroke="#222"/></svg>
<div class="a tt" style="left:35.0px;top:320.8px">Ergebnisse</div>
<svg class="a" style="left:21.0px;top:335.9px" width="11" height="11"><rect x="1.5" y="0.5" width="3" height="10" fill="#e8e040" stroke="#222" stroke-width="1"/><path d="M4.5 3.5h5M4.5 6.5h5" stroke="#222" stroke-width="1.2"/><rect x="4.5" y="4" width="4" height="2" fill="#e8e040"/></svg>
<div class="a tt" style="left:35.0px;top:336.2px">Stahl</div>
<svg class="a" style="left:21.0px;top:351.3px" width="11" height="11"><path d="M1 1.5h9M1 9.5h9M5.5 1.5v8" stroke="#111" stroke-width="2"/><path d="M1 1v2M10 1v2M1 8v2M10 8v2" stroke="#111" stroke-width="1.2"/></svg>
<div class="a tt" style="left:35.0px;top:351.6px">Aluminium</div>
<svg class="a" style="left:21.0px;top:366.7px" width="11" height="11"><rect x="0.5" y="1" width="2" height="9" fill="#20b0b0"/><path d="M2.5 5.5h2" stroke="#222" stroke-width="1.2"/><rect x="5" y="1" width="5.5" height="9" fill="#f2f2f2" stroke="#999"/><path d="M6.5 4l2 1.5-2 1.5" stroke="#555" fill="none"/></svg>
<div class="a tt" style="left:35.0px;top:367.0px">Integrierte Design Forms</div>
<svg class="a" style="left:21.0px;top:382.0px" width="11" height="11"><rect x="1" y="1" width="4" height="9" rx="1" fill="#e8e020" stroke="#555" stroke-width="0.8"/><rect x="6" y="1" width="4" height="9" rx="1" fill="#e8e020" stroke="#555" stroke-width="0.8"/></svg>
<div class="a tt" style="left:35.0px;top:382.3px">Holz</div>
<svg class="a" style="left:21.0px;top:397.4px" width="11" height="11"><path d="M0.5 1h10v3h-3v6.5h-4V4h-3z" fill="#777" stroke="#222" stroke-width="1"/></svg>
<div class="a tt" style="left:35.0px;top:397.7px">Beton</div>
<svg class="a" style="left:21.0px;top:412.8px" width="11" height="11"><rect x="0.5" y="1" width="10" height="2.5" fill="#20b8b8"/><path d="M5.5 3.5v6M2.5 9.5h6" stroke="#3344aa" stroke-width="1.8"/></svg>
<div class="a tt" style="left:35.0px;top:413.1px">Verbund</div>
<svg class="a" style="left:21.0px;top:428.2px" width="11" height="11"><path d="M1 2 Q3 0.5 5.5 2 Q8 0.5 10 2 V10 Q8 8.5 5.5 10 Q3 8.5 1 10z" fill="#f0e060" stroke="#111" stroke-width="1.2"/><path d="M5.5 2v8" stroke="#111"/></svg>
<div class="a tt" style="left:35.0px;top:428.5px">Dokument</div>
<svg class="a" style="left:21.0px;top:443.6px" width="11" height="11"><rect x="1.5" y="0.5" width="8" height="10" fill="#eef" stroke="#3a5aaa" stroke-width="1"/><rect x="2.5" y="1.5" width="6" height="2" fill="#3a5aaa"/><path d="M3 5.5h5M3 7.5h5" stroke="#3a5aaa" stroke-width="0.8"/></svg>
<div class="a tt" style="left:35.0px;top:443.9px">Berechnungsprotokoll</div>
<svg class="a" style="left:10px;top:460.0px" width="9" height="9"><rect x="0.5" y="0.5" width="8" height="8" fill="#f4f4f4" stroke="#999"/><path d="M2 4.5h5" stroke="#333"/></svg>
<svg class="a" style="left:21.0px;top:459.0px" width="11" height="11"><path d="M1 0.5v10h9.5" stroke="#222" stroke-width="1.4" fill="none"/><path d="M2 9l4-5 2 2 3-5" stroke="#1aa06a" stroke-width="1.4" fill="none"/><path d="M3 8h5" stroke="#2233aa"/></svg>
<div class="a tt" style="left:35.0px;top:459.3px">Zeichnungswerkzeuge</div>
<svg class="a" style="left:33.5px;top:474.4px" width="11" height="11"><rect x="3" y="0.5" width="7" height="8" fill="#ddd" stroke="#222"/><rect x="1" y="2.5" width="7" height="8" fill="#eee" stroke="#222"/><rect x="2.5" y="5" width="3" height="3" fill="#d22"/></svg>
<div class="a tt" style="left:47.5px;top:474.7px">Bildergalerie</div>
<svg class="a" style="left:33.5px;top:489.8px" width="11" height="11"><path d="M1 0.5h6l3 3v7h-9z" fill="#fff" stroke="#222" stroke-width="1.2"/><path d="M2.5 9l2-5 2 4 2-2" stroke="#c9b000" stroke-width="1.2" fill="none"/></svg>
<div class="a tt" style="left:47.5px;top:490.1px">Zeichnungsgalerie</div>
<svg class="a" style="left:33.5px;top:505.2px" width="11" height="11"><path d="M1 3l5 6 4-2-5-6z" fill="#e8d860" stroke="#8a2a9a" stroke-width="1.2"/><path d="M2 6l6-3" stroke="#8a2a9a" stroke-width="1.2"/></svg>
<div class="a tt" style="left:47.5px;top:505.5px">Grundrissansicht</div>
<svg class="a" style="left:33.5px;top:520.5px" width="11" height="11"><path d="M1 7l4-5 5 2-4 5z" fill="#f0d050" stroke="#9a2a9a" stroke-width="1.3"/><path d="M3 5l5 2" stroke="#9a2a9a"/></svg>
<div class="a tt" style="left:47.5px;top:520.8px">Schnitt</div>
<svg class="a" style="left:33.5px;top:535.9px" width="11" height="11"><path d="M0.5 8 Q2 2 6 3 L10 4 Q8 10 4 9z" fill="#f0c040" stroke="#a02a90" stroke-width="1.3"/></svg>
<div class="a tt" style="left:47.5px;top:536.2px">Allgemeiner Schnitt</div>
<svg class="a" style="left:10px;top:552.3px" width="9" height="9"><rect x="0.5" y="0.5" width="8" height="8" fill="#f4f4f4" stroke="#999"/><path d="M2 4.5h5" stroke="#333"/><path d="M4.5 2v5" stroke="#333"/></svg>
<svg class="a" style="left:21.0px;top:551.3px" width="11" height="11"><rect x="1" y="1" width="3" height="9" fill="#444" stroke="#111"/><rect x="4.5" y="0.5" width="3" height="10" fill="#666" stroke="#111"/><rect x="7.5" y="2" width="2.5" height="8" fill="#333" stroke="#111"/></svg>
<div class="a tt" style="left:35.0px;top:551.6px">Bibliotheken</div>
<svg class="a" style="left:10px;top:567.7px" width="9" height="9"><rect x="0.5" y="0.5" width="8" height="8" fill="#f4f4f4" stroke="#999"/><path d="M2 4.5h5" stroke="#333"/><path d="M4.5 2v5" stroke="#333"/></svg>
<svg class="a" style="left:21.0px;top:566.7px" width="11" height="11"><path d="M1 10L8 3M3 1l3 0 2 2-1 1z" stroke="#111" stroke-width="1.6" fill="#111"/><path d="M10 10L3 3" stroke="#111" stroke-width="1.6"/></svg>
<div class="a tt" style="left:35.0px;top:567.0px">Werkzeuge</div>
<div class="a" style="left:161.5px;top:116.5px;width:63px;height:122px;background:#ececec;border:1px solid #c4c4c4;box-shadow:0 0 1px #ccc"></div>
<div class="a" style="left:165px;top:123px;font-size:9.4px;color:#555;line-height:12px">Ansi...</div>
<svg class="a" style="left:195px;top:124px" width="28" height="10"><path d="M1 2.5h7l-3.5 4z" fill="#555"/><path d="M17 1.5l6 6M23 1.5l-6 6" stroke="#444" stroke-width="1.1"/></svg>
<svg class="a" style="left:165px;top:140px" width="12" height="12"><ellipse cx="6" cy="8" rx="4.5" ry="3" fill="#30c0b0" stroke="#222"/><circle cx="6" cy="8" r="1.5" fill="#fff"/><text x="2" y="4" font-size="4.5" fill="#222" font-family="Liberation Sans">XY</text><path d="M6 1v4" stroke="#d22"/></svg>
<svg class="a" style="left:180px;top:140px" width="12" height="12"><ellipse cx="6" cy="8" rx="4.5" ry="3" fill="#30c0b0" stroke="#222"/><circle cx="6" cy="8" r="1.5" fill="#fff"/><text x="2" y="4" font-size="4.5" fill="#222" font-family="Liberation Sans">YZ</text><path d="M6 1v4" stroke="#d22"/></svg>
<svg class="a" style="left:195px;top:140px" width="12" height="12"><ellipse cx="6" cy="8" rx="4.5" ry="3" fill="#30c0b0" stroke="#222"/><circle cx="6" cy="8" r="1.5" fill="#fff"/><text x="2" y="4" font-size="4.5" fill="#222" font-family="Liberation Sans">ZX</text><path d="M6 1v4" stroke="#d22"/></svg>
<svg class="a" style="left:209px;top:140px" width="12" height="12"><ellipse cx="6" cy="8" rx="4.5" ry="3" fill="#30c0b0" stroke="#222"/><circle cx="6" cy="8" r="1.5" fill="#fff"/><text x="2" y="4" font-size="4.5" fill="#222" font-family="Liberation Sans"></text><path d="M6 1v4" stroke="#d22"/></svg>
<svg class="a" style="left:165px;top:161px" width="12" height="12"><rect x="2" y="5" width="7" height="6" fill="#30b0b0" stroke="#222"/><path d="M3 5l3-4" stroke="#d22" stroke-width="1.2"/></svg>
<svg class="a" style="left:180px;top:161px" width="12" height="12"><path d="M3 1v9h8" stroke="#2233aa" stroke-width="1.3" fill="none"/><rect x="5" y="4" width="5" height="4" fill="#e04050"/><path d="M3 10l-2 1" stroke="#3c3"/></svg>
<svg class="a" style="left:195px;top:161px" width="12" height="12"><circle cx="5" cy="5" r="3.5" fill="#fff" stroke="#222" stroke-width="1.3"/><path d="M7.5 7.5l3.5 3.5" stroke="#222" stroke-width="1.6"/><path d="M3 5h4M5 3v4" stroke="#222" stroke-width="0.8"/></svg>
<svg class="a" style="left:209px;top:161px" width="12" height="12"><circle cx="5" cy="5" r="3.5" fill="#fff" stroke="#222" stroke-width="1.3"/><path d="M7.5 7.5l3.5 3.5" stroke="#222" stroke-width="1.6"/><path d="M3 5h4" stroke="#222" stroke-width="0.8"/></svg>
<svg class="a" style="left:165px;top:182px" width="12" height="12"><circle cx="5" cy="5" r="3.5" fill="#fff" stroke="#222" stroke-width="1.3"/><path d="M7.5 7.5l3.5 3.5" stroke="#222" stroke-width="1.6"/><rect x="1" y="7" width="5" height="4" fill="none" stroke="#555" stroke-width="0.8"/></svg>
<svg class="a" style="left:180px;top:182px" width="12" height="12"><circle cx="6" cy="5" r="3.5" fill="#fff" stroke="#222" stroke-width="1.3"/><path d="M8.5 7.5l3 3.5" stroke="#222" stroke-width="1.6"/><path d="M1 10h6" stroke="#222"/></svg>
<svg class="a" style="left:195px;top:182px" width="12" height="12"><circle cx="5" cy="5" r="3.5" fill="#fff" stroke="#aaa" stroke-width="1.3"/><path d="M7.5 7.5l3.5 3.5" stroke="#aaa" stroke-width="1.6"/><path d="M3 6v5" stroke="#e99"/></svg>
<svg class="a" style="left:209px;top:182px" width="12" height="12"><path d="M1 5h8v6H1z" fill="#e8e040" stroke="#222"/><path d="M9 5l2-3v6l-2 3" fill="#c8c020" stroke="#222"/><path d="M3 5l3-4" stroke="#d22"/></svg>
<svg class="a" style="left:166px;top:203px" width="12" height="12"><circle cx="5" cy="4.5" r="3" fill="#f0e040" stroke="#555"/><rect x="3.5" y="7.5" width="3" height="3" fill="#555"/></svg>
<div class="a" style="left:182px;top:202px;width:1px;height:14px;background:#d0d0d0"></div>
<svg class="a" style="left:186px;top:202px" width="12" height="12"><rect x="1" y="4" width="9" height="7" fill="#c02030" stroke="#222"/><rect x="3" y="6" width="5" height="2" fill="#fff"/><path d="M6 4a3 3 0 0 1 5-2" stroke="#2233aa" fill="none"/></svg>
<svg class="a" style="left:201px;top:202px" width="12" height="12"><rect x="1" y="4" width="9" height="7" fill="#e8b0b8" stroke="#999"/><rect x="3" y="6" width="5" height="2" fill="#fff"/><path d="M6 4a3 3 0 0 1 5-2" stroke="#99c" fill="none"/></svg>
<div class="a" style="left:163px;top:218px;width:59px;height:1px;background:#d8d8d8"></div>
<svg class="a" style="left:165px;top:222px" width="12" height="12"><rect x="1" y="1" width="10" height="10" fill="#e8e040" stroke="#222" stroke-width="1.3"/><path d="M8 3.5H4v5h4" stroke="#222" stroke-width="1.4" fill="none"/></svg>
<svg class="a" style="left:180px;top:222px" width="12" height="12"><path d="M1 4l3-3h7v7l-3 3H1z" fill="#3040b0" stroke="#111"/><rect x="2" y="4" width="6" height="6" fill="#fff" stroke="#111"/><path d="M3 9l4-4" stroke="#d22"/></svg>
<div class="a" style="left:252px;top:85px;width:708px;height:556px;background:#e4e4e4"></div>
<div class="a" style="left:256px;top:87px;width:701px;height:535px;background:#e2e2e2;border-left:1.5px solid #6a6a6a;border-top:1px solid #6a6a6a"></div>
<div class="a" style="left:257.5px;top:88px;width:1px;height:533px;background:#f4f4f4"></div>
<div class="a" style="left:257.5px;top:88px;width:698px;height:1px;background:#eeeeee"></div>
<div class="a" style="left:957px;top:86px;width:2px;height:550px;background:#f6f6f6"></div>
<svg class="a" style="left:258px;top:88px" width="698" height="533" viewBox="258 88 698 533"><g stroke="#2e2e2e" stroke-width="1.1" fill="none" stroke-dasharray="3,2.2">
<path d="M364.2 134.3 L431.7 87.7"/>
<path d="M364.2 134.3 V372"/>
<path d="M405 102.7 V209"/>
<path d="M445.8 88 V215 M448.5 88 V215 M454.5 88 V218"/>
<path d="M364.2 241 L423 197"/>
<path d="M364.2 301 L405 272 M364.2 316 L405 291"/>
<path d="M406.7 206 L446.7 176.8 L545 207.5"/>
<path d="M489 88 L545 106"/>
<path d="M540 106 L855 211"/>
<path d="M588 117 V160 M649 137 V146"/>
<path d="M710.6 159 V303"/>
<path d="M845 202 V395 M851.5 204 V392"/>
<path d="M669 250.6 L858 314"/>
</g>
<g stroke="#444" stroke-width="1.2" fill="none">
<path d="M478 88 V236 M489.2 88 V234"/>
<path d="M463.3 166.8 L478 155"/>
<path d="M463 228 L478 216"/>
<path d="M489 89 L494 93"/>
</g>
<text x="478.0" y="116.0" font-size="6.5" fill="#222" transform="rotate(-90 478.0 116.0)" font-family="Liberation Sans" font-style="italic">2130</text>
<text x="489.0" y="173.0" font-size="6.5" fill="#222" transform="rotate(-90 489.0 173.0)" font-family="Liberation Sans" font-style="italic">4890</text>
<text x="478.0" y="197.0" font-size="6.5" fill="#222" transform="rotate(-90 478.0 197.0)" font-family="Liberation Sans" font-style="italic">1260</text>
<text x="478.0" y="232.0" font-size="6.5" fill="#222" transform="rotate(-90 478.0 232.0)" font-family="Liberation Sans" font-style="italic">400</text>
<polygon points="293.0,425.0 695.0,560.0 695.0,563.2 293.0,428.2" fill="#bdbdbd" stroke="none" stroke-width="1" />
<polygon points="695.0,560.0 922.0,391.0 922.0,394.2 695.0,563.2" fill="#bdbdbd" stroke="none" stroke-width="1" />
<polygon points="293.0,425.0 695.0,560.0 922.0,391.0 520.0,256.0" fill="#a9a9a9" stroke="#2a2a2a" stroke-width="1" />
<line x1="293.0" y1="428.2" x2="695.0" y2="563.2" stroke="#333" stroke-width="1" />
<line x1="695.0" y1="563.2" x2="922.0" y2="394.2" stroke="#333" stroke-width="1" />
<line x1="293.0" y1="425.0" x2="293.0" y2="428.2" stroke="#333" stroke-width="1" />
<line x1="695.0" y1="560.0" x2="695.0" y2="563.2" stroke="#333" stroke-width="1" />
<line x1="296.0" y1="423.8" x2="405.5" y2="345.5" stroke="#333" stroke-width="0.9" />
<line x1="696.0" y1="561.5" x2="921.0" y2="392.5" stroke="#555" stroke-width="0.8" />
<line x1="808.0" y1="356.0" x2="920.0" y2="393.5" stroke="#444" stroke-width="0.8" />
<g stroke="#444" stroke-width="1.1" fill="none">
<path d="M874 216.5 L912.4 229 M895.7 223 V458 M912.4 229 V463 M874 317.7 L895.7 325"/>
<path d="M867 378 L895 386"/>
</g>
<text x="894.0" y="282.0" font-size="6.5" fill="#222" transform="rotate(-90 894.0 282.0)" font-family="Liberation Sans" font-style="italic">2130</text>
<text x="894.0" y="362.0" font-size="6.5" fill="#222" transform="rotate(-90 894.0 362.0)" font-family="Liberation Sans" font-style="italic">1260</text>
<text x="911.0" y="355.0" font-size="6.5" fill="#222" transform="rotate(-90 911.0 355.0)" font-family="Liberation Sans" font-style="italic">4890</text>
<text x="894.0" y="402.0" font-size="6.5" fill="#222" transform="rotate(-90 894.0 402.0)" font-family="Liberation Sans" font-style="italic">400</text>
<text x="894.0" y="438.0" font-size="6.5" fill="#222" transform="rotate(-90 894.0 438.0)" font-family="Liberation Sans" font-style="italic">1100</text>
<g stroke="#222" stroke-width="1.1" fill="none">
<path d="M335 395 L733 525"/>
<path d="M323.75 403 L726.5 536"/>
<path d="M365 398 V441 L448.75 379.4 M365 421.8 L448.75 360"/>
<path d="M448.75 360 V379.4 L503 394.5"/>
<path d="M475 440 L488.75 430 M583 466 L598 456 M747 520 L760 511"/>
<path d="M405 367.5 V384" stroke-width="2" stroke="#555"/><circle cx="405" cy="386" r="2" fill="none"/>
<path d="M336 396 L356 384.5"/>
</g>
<g stroke="#2a2a2a" stroke-width="1.1" fill="none" stroke-dasharray="3,2.2">
<path d="M369 375 L408 346"/>
<path d="M369 375 L503.5 418 L660 468"/>
<path d="M382.5 380 L505 418.75"/>
<path d="M660 468.75 L760 502.5 L800 476"/>
<path d="M545 415 L600 435"/>
<path d="M818 372 L845 380 M818 430 L845 438"/>
</g>
<text x="385.0" y="404.5" font-size="6.8" fill="#1a1a1a" text-anchor="middle" transform="rotate(-37 385.0 402.5)" font-family="Liberation Sans">1424</text>
<text x="406.0" y="407.0" font-size="6.8" fill="#1a1a1a" text-anchor="middle" transform="rotate(-45 406.0 405.0)" font-family="Liberation Sans">2573</text>
<text x="411.0" y="419.0" font-size="6.8" fill="#1a1a1a" text-anchor="middle" transform="rotate(18 411.0 417.0)" font-family="Liberation Sans">3157</text>
<text x="426.0" y="373.0" font-size="6.8" fill="#1a1a1a" text-anchor="middle" transform="rotate(-37 426.0 371.0)" font-family="Liberation Sans">1424</text>
<text x="508.7" y="450.0" font-size="6.8" fill="#1a1a1a" text-anchor="middle" transform="rotate(18 508.7 448.0)" font-family="Liberation Sans">1451</text>
<text x="528.0" y="469.0" font-size="6.8" fill="#1a1a1a" text-anchor="middle" transform="rotate(18 528.0 467.0)" font-family="Liberation Sans">9503</text>
<text x="570.0" y="471.6" font-size="6.8" fill="#1a1a1a" text-anchor="middle" transform="rotate(18 570.0 469.6)" font-family="Liberation Sans">1451</text>
<text x="649.0" y="443.5" font-size="6.8" fill="#1a1a1a" text-anchor="middle" transform="rotate(18 649.0 441.5)" font-family="Liberation Sans">9503</text>
<text x="668.0" y="503.5" font-size="6.8" fill="#1a1a1a" text-anchor="middle" transform="rotate(18 668.0 501.5)" font-family="Liberation Sans">3144</text>
<g stroke="#2a2a2a" stroke-width="1" fill="none">
<path d="M807.8 477.8 L850 491 M790 492 L850 510.7 M790 513.5 L828.5 526.6 M852 488 L893.2 460 M828.5 526.6 L912 463.8 M812.5 521 L850 493.8 M844.4 467.5 V512.5 M851.4 467.5 V512.5 M872.6 451.6 L894 458 M894.7 458 L912.3 463.8"/>
</g>
<text x="868.8" y="474.2" font-size="6.2" fill="#1a1a1a" text-anchor="middle" transform="rotate(-37 868.8 472.2)" font-family="Liberation Sans">1424</text>
<text x="867.0" y="494.0" font-size="6.2" fill="#1a1a1a" text-anchor="middle" transform="rotate(-37 867.0 492.0)" font-family="Liberation Sans">2873</text>
<text x="826.6" y="506.0" font-size="6.2" fill="#1a1a1a" text-anchor="middle" transform="rotate(-37 826.6 504.0)" font-family="Liberation Sans">3014</text>
<polygon points="404.7,209.3 544.0,253.9 544.0,387.1 404.7,342.5" fill="#ebfbeb" stroke="none" stroke-width="1" />
<line x1="404.7" y1="222.7" x2="544.0" y2="267.3" stroke="#1a1a1a" stroke-width="1.6" />
<line x1="404.7" y1="246.8" x2="544.0" y2="291.4" stroke="#1a1a1a" stroke-width="1.6" />
<line x1="404.7" y1="271.0" x2="544.0" y2="315.6" stroke="#1a1a1a" stroke-width="1.6" />
<line x1="404.7" y1="295.2" x2="544.0" y2="339.8" stroke="#1a1a1a" stroke-width="1.6" />
<line x1="404.7" y1="319.3" x2="544.0" y2="363.9" stroke="#1a1a1a" stroke-width="1.6" />
<line x1="450.5" y1="224.0" x2="450.5" y2="357.2" stroke="#1a1a1a" stroke-width="1.6" />
<line x1="499.4" y1="239.6" x2="499.4" y2="372.8" stroke="#1a1a1a" stroke-width="1.6" />
<line x1="404.7" y1="209.3" x2="404.7" y2="342.5" stroke="#1a1a1a" stroke-width="1.6" />
<line x1="544.0" y1="253.9" x2="544.0" y2="387.1" stroke="#1a1a1a" stroke-width="1.3" />
<line x1="404.7" y1="342.5" x2="544.0" y2="387.1" stroke="#1a1a1a" stroke-width="1.2" />
<line x1="404.7" y1="209.3" x2="544.0" y2="253.9" stroke="#6e6628" stroke-width="3" />
<line x1="404.7" y1="209.3" x2="544.0" y2="253.9" stroke="#8e8840" stroke-width="1" stroke-dasharray="1,2.5" />
<rect x="541" y="255" width="4" height="8" fill="#e03030"/><rect x="541" y="316" width="4" height="8" fill="#e03030"/>
<polygon points="545.6,154.6 646.7,144.0 646.7,197.0 566.5,203.5" fill="#d2ecd2" stroke="none" stroke-width="1" />
<polygon points="646.7,144.0 667.5,195.0 646.7,197.0" fill="#c4e0c4" stroke="none" stroke-width="1" />
<polygon points="655.0,165.0 667.5,195.0 655.0,196.0" fill="#abcbab" stroke="none" stroke-width="1" />
<g stroke="#1a1a1a" stroke-width="1.4" fill="none">
<path d="M556 171.5 L646.7 162 M563 193 L646.7 185 M595.8 150 V200"/>
<path d="M655 165 V196 M646.7 162 L655 170"/>
</g>
<clipPath id="sf"><polygon points="545.6,154.6 566.5,203.5 566.5,432 545.6,405"/></clipPath>
<polygon points="545.6,154.6 566.5,203.5 566.5,432.0 545.6,405.0" fill="#adcfad" stroke="none" stroke-width="1" />
<g stroke="#1a1a1a" stroke-width="1.3" fill="none" clip-path="url(#sf)">
<path d="M545.8 178.0 L566.5 227.5"/>
<path d="M545.8 202.0 L566.5 251.5"/>
<path d="M545.8 226.0 L566.5 275.5"/>
<path d="M545.8 250.0 L566.5 299.5"/>
<path d="M545.8 274.0 L566.5 323.5"/>
<path d="M545.8 298.0 L566.5 347.5"/>
<path d="M545.8 322.0 L566.5 371.5"/>
<path d="M545.8 346.0 L566.5 395.5"/>
<path d="M545.8 370.0 L566.5 419.5"/>
<path d="M545.8 394.0 L566.5 443.5"/>
<path d="M545.8 418.0 L566.5 467.5"/>
<path d="M556.2 181 V440 M545.8 154 V440"/>
</g>
<polygon points="566.5,203.5 667.5,195.0 667.5,333.0 566.5,342.5" fill="#d5f2d5" stroke="none" stroke-width="1" />
<polygon points="563.0,342.8 590.0,340.5 590.0,384.6 563.0,386.7" fill="#d5f2d5" stroke="none" stroke-width="1" />
<polygon points="590.0,340.5 667.5,333.0 667.5,430.0 590.0,436.7" fill="#d5f2d5" stroke="none" stroke-width="1" />
<rect x="562.5" y="205" width="4" height="137" fill="#a8c8ee"/>
<g stroke="#1a1a1a" stroke-width="1.5" fill="none">
<path d="M566.5 223 L667.5 213.9"/>
<path d="M566.5 247 L667.5 237.9"/>
<path d="M566.5 271 L667.5 261.9"/>
<path d="M566.5 295 L667.5 285.9"/>
<path d="M566.5 319 L667.5 309.9"/>
<path d="M566.5 342.5 L667.5 333.4"/>
<path d="M563 362.7 L590 360.6 M563 386.7 L590 384.6 M590 363.75 L667.5 357.5 M590 387.7 L667.5 381.5 M590 411.7 L667.5 405.4 M590 436.7 L667.5 430"/>
<path d="M617.5 199 V434 M590 340.5 V437 M566.5 203.5 V342.5 M563 342.8 V386.7 M667.5 195 V431"/>
</g>
<polyline points="566.5,203.5 545.6,154.6 646.7,144 667.5,195 566.5,203.5" fill="none" stroke="#6e6628" stroke-width="3"/>
<polyline points="566.5,203.5 545.6,154.6 646.7,144 667.5,195 566.5,203.5" fill="none" stroke="#8e8840" stroke-width="1" stroke-dasharray="1,2.5"/>
<polygon points="556.7,330.0 563.3,332.0 563.3,427.5 556.7,423.0" fill="#b5dab5" stroke="#333" stroke-width="0.8" />
<rect x="562" y="332" width="1.8" height="95" fill="#9fc6ee"/>
<rect x="664" y="296" width="5" height="8" fill="#e03030"/><rect x="664" y="356" width="5" height="8" fill="#e03030"/>
<polygon points="668.0,296.7 808.0,342.5 808.0,475.8 668.0,430.0" fill="#ebfbeb" stroke="none" stroke-width="1" />
<line x1="668.0" y1="310.5" x2="808.0" y2="356.3" stroke="#1a1a1a" stroke-width="1.6" />
<line x1="668.0" y1="334.0" x2="808.0" y2="379.8" stroke="#1a1a1a" stroke-width="1.6" />
<line x1="668.0" y1="358.0" x2="808.0" y2="403.8" stroke="#1a1a1a" stroke-width="1.6" />
<line x1="668.0" y1="382.0" x2="808.0" y2="427.8" stroke="#1a1a1a" stroke-width="1.6" />
<line x1="668.0" y1="406.0" x2="808.0" y2="451.8" stroke="#1a1a1a" stroke-width="1.6" />
<line x1="714.0" y1="311.7" x2="714.0" y2="445.0" stroke="#1a1a1a" stroke-width="1.6" />
<line x1="761.0" y1="327.1" x2="761.0" y2="460.4" stroke="#1a1a1a" stroke-width="1.6" />
<line x1="668.0" y1="296.7" x2="668.0" y2="430.0" stroke="#1a1a1a" stroke-width="1.6" />
<line x1="808.0" y1="342.5" x2="808.0" y2="475.8" stroke="#1a1a1a" stroke-width="1.3" />
<line x1="668.0" y1="430.0" x2="808.0" y2="475.8" stroke="#1a1a1a" stroke-width="1.2" />
<line x1="668.0" y1="296.7" x2="808.0" y2="342.5" stroke="#6e6628" stroke-width="3" />
<line x1="668.0" y1="296.7" x2="808.0" y2="342.5" stroke="#8e8840" stroke-width="1" stroke-dasharray="1,2.5" />
<line x1="808.0" y1="342.5" x2="808.0" y2="474.0" stroke="#26305a" stroke-width="2" />
<polygon points="503.0,359.2 508.0,371.7 508.0,423.3 503.0,413.3" fill="#7eaee6" stroke="#222" stroke-width="0.8" />
<polygon points="508.0,371.7 556.7,366.7 556.7,419.2 508.0,423.3" fill="#ade0fb" stroke="#222" stroke-width="0.8" />
<polygon points="503.0,359.2 552.5,354.7 556.7,366.7 508.0,371.7" fill="#686868" stroke="#222" stroke-width="0.8" />
<polygon points="603.8,383.3 613.3,407.5 613.3,459.2 603.8,436.0" fill="#7eaee6" stroke="#222" stroke-width="0.8" />
<polygon points="613.3,407.5 638.3,405.0 638.3,456.7 613.3,459.2" fill="#ade0fb" stroke="#222" stroke-width="0.8" />
<polygon points="603.8,383.3 628.3,380.0 638.3,405.0 613.3,407.5" fill="#686868" stroke="#222" stroke-width="0.8" />
<polygon points="807.5,394.2 850.8,370.0 850.8,441.7 807.5,475.0" fill="#4e3412" stroke="#2a1a08" stroke-width="1" />
<polygon points="812.5,406.0 843.0,387.0 843.0,438.0 812.5,460.0" fill="#a7a7a7" stroke="none" stroke-width="1" />
<line x1="816.0" y1="428.0" x2="841.0" y2="436.0" stroke="#333" stroke-width="1.1" stroke-dasharray="3,2" />
<polygon points="807.5,394.2 850.8,370.0 845.0,380.0 812.5,402.0" fill="#7e5a24" stroke="none" stroke-width="1" />
<polygon points="843.0,382.0 848.0,379.0 848.0,440.0 843.0,438.0" fill="#f0b052" stroke="none" stroke-width="1" />
<polygon points="812.5,456.0 843.0,435.0 848.0,439.0 815.0,462.0" fill="#7e5a24" stroke="none" stroke-width="1" />
<line x1="807.5" y1="394.2" x2="807.5" y2="475.0" stroke="#26305a" stroke-width="1.6" />
<rect x="291.5" y="397" width="3.5" height="28" fill="#1010e0"/>
<path d="M296 423 L320 405 M304 413 L323 410 M313 402 L320 412" stroke="#20c020" stroke-width="1.3" fill="none"/>
<path d="M295 426 L325 436 M318 430 L325 436 L318 439 M322 428 L333 436 M318 437 L332 432" stroke="#e02020" stroke-width="1.3" fill="none"/>
<path d="M281.5 572 V590" stroke="#3050d0" stroke-width="1.1" fill="none"/>
<path d="M281.5 590 L293 582" stroke="#30c030" stroke-width="1.1"/>
<path d="M281.5 590 L297.5 595" stroke="#e04040" stroke-width="1.1"/>
<text x="282.5" y="578" font-size="6" fill="#3050d0" font-family="Liberation Sans">z</text>
<text x="294.5" y="587" font-size="6" fill="#30b030" font-family="Liberation Sans">Y</text>
<text x="298" y="600" font-size="6" fill="#e04040" font-family="Liberation Sans">x</text>
<defs><radialGradient id="sh" cx="0.5" cy="0.5" r="0.5"><stop offset="0" stop-color="#cfcfcf"/><stop offset="0.75" stop-color="#d9d9d9"/><stop offset="1" stop-color="#e2e2e2" stop-opacity="0"/></radialGradient><linearGradient id="cg" x1="0" y1="0" x2="0" y2="1"><stop offset="0" stop-color="#8a8a8a"/><stop offset="1" stop-color="#a8a8a8"/></linearGradient></defs>
<ellipse cx="893" cy="550" rx="70" ry="50" fill="url(#sh)"/>
<polygon points="940.0,556.3 940.0,553.7 945.0,555.0" fill="#5a5a5a"/><line x1="940.0" y1="555.0" x2="945.0" y2="555.0" stroke="#5a5a5a" stroke-width="1.2"/><polygon points="939.5,558.4 940.0,555.9 944.7,557.5" fill="#5a5a5a"/><line x1="939.8" y1="557.2" x2="944.7" y2="557.5" stroke="#5a5a5a" stroke-width="1.2"/><polygon points="938.6,560.5 939.6,558.1 944.0,560.0" fill="#5a5a5a"/><line x1="939.1" y1="559.3" x2="944.0" y2="560.0" stroke="#5a5a5a" stroke-width="1.2"/><polygon points="937.3,562.5 938.7,560.3 942.8,562.4" fill="#5a5a5a"/><line x1="938.0" y1="561.4" x2="942.8" y2="562.4" stroke="#5a5a5a" stroke-width="1.2"/><polygon points="935.6,564.4 937.3,562.4 941.0,564.8" fill="#5a5a5a"/><line x1="936.4" y1="563.4" x2="941.0" y2="564.8" stroke="#5a5a5a" stroke-width="1.2"/><polygon points="933.5,566.3 935.4,564.5 938.9,567.0" fill="#5a5a5a"/><line x1="934.5" y1="565.4" x2="938.9" y2="567.0" stroke="#5a5a5a" stroke-width="1.2"/><polygon points="931.0,568.0 933.1,566.4 936.2,569.2" fill="#5a5a5a"/><line x1="932.1" y1="567.2" x2="936.2" y2="569.2" stroke="#5a5a5a" stroke-width="1.2"/><polygon points="928.2,569.6 930.4,568.3 933.2,571.2" fill="#5a5a5a"/><line x1="929.3" y1="569.0" x2="933.2" y2="571.2" stroke="#5a5a5a" stroke-width="1.2"/><polygon points="925.1,571.1 927.4,570.0 929.8,573.0" fill="#5a5a5a"/><line x1="926.2" y1="570.6" x2="929.8" y2="573.0" stroke="#5a5a5a" stroke-width="1.2"/><polygon points="921.6,572.5 924.0,571.5 926.0,574.7" fill="#5a5a5a"/><line x1="922.8" y1="572.0" x2="926.0" y2="574.7" stroke="#5a5a5a" stroke-width="1.2"/><polygon points="917.9,573.7 920.3,572.9 921.9,576.2" fill="#5a5a5a"/><line x1="919.1" y1="573.3" x2="921.9" y2="576.2" stroke="#5a5a5a" stroke-width="1.2"/><polygon points="913.9,574.7 916.4,574.1 917.5,577.5" fill="#7c7c7c"/><line x1="915.2" y1="574.4" x2="917.5" y2="577.5" stroke="#7c7c7c" stroke-width="1.2"/><polygon points="909.7,575.6 912.3,575.1 912.9,578.6" fill="#7c7c7c"/><line x1="911.0" y1="575.3" x2="912.9" y2="578.6" stroke="#7c7c7c" stroke-width="1.2"/><polygon points="905.4,576.2 907.9,575.9 908.1,579.4" fill="#7c7c7c"/><line x1="906.6" y1="576.1" x2="908.1" y2="579.4" stroke="#7c7c7c" stroke-width="1.2"/><polygon points="900.9,576.7 903.5,576.4 903.1,580.0" fill="#7c7c7c"/><line x1="902.2" y1="576.6" x2="903.1" y2="580.0" stroke="#7c7c7c" stroke-width="1.2"/><polygon points="896.3,577.0 898.9,576.8 898.1,580.4" fill="#7c7c7c"/><line x1="897.6" y1="576.9" x2="898.1" y2="580.4" stroke="#7c7c7c" stroke-width="1.2"/><polygon points="891.7,577.0 894.3,577.0 893.0,580.5" fill="#7c7c7c"/><line x1="893.0" y1="577.0" x2="893.0" y2="580.5" stroke="#7c7c7c" stroke-width="1.2"/><polygon points="887.1,576.8 889.7,577.0 887.9,580.4" fill="#7c7c7c"/><line x1="888.4" y1="576.9" x2="887.9" y2="580.4" stroke="#7c7c7c" stroke-width="1.2"/><polygon points="882.5,576.4 885.1,576.7 882.9,580.0" fill="#7c7c7c"/><line x1="883.8" y1="576.6" x2="882.9" y2="580.0" stroke="#7c7c7c" stroke-width="1.2"/><polygon points="878.1,575.9 880.6,576.2 877.9,579.4" fill="#7c7c7c"/><line x1="879.4" y1="576.1" x2="877.9" y2="579.4" stroke="#7c7c7c" stroke-width="1.2"/><polygon points="873.7,575.1 876.3,575.6 873.1,578.6" fill="#7c7c7c"/><line x1="875.0" y1="575.3" x2="873.1" y2="578.6" stroke="#7c7c7c" stroke-width="1.2"/><polygon points="869.6,574.1 872.1,574.7 868.5,577.5" fill="#b4b4b4"/><line x1="870.8" y1="574.4" x2="868.5" y2="577.5" stroke="#b4b4b4" stroke-width="1.2"/><polygon points="865.7,572.9 868.1,573.7 864.1,576.2" fill="#b4b4b4"/><line x1="866.9" y1="573.3" x2="864.1" y2="576.2" stroke="#b4b4b4" stroke-width="1.2"/><polygon points="862.0,571.5 864.4,572.5 860.0,574.7" fill="#b4b4b4"/><line x1="863.2" y1="572.0" x2="860.0" y2="574.7" stroke="#b4b4b4" stroke-width="1.2"/><polygon points="858.6,570.0 860.9,571.1 856.2,573.0" fill="#b4b4b4"/><line x1="859.8" y1="570.6" x2="856.2" y2="573.0" stroke="#b4b4b4" stroke-width="1.2"/><polygon points="855.6,568.3 857.8,569.6 852.8,571.2" fill="#b4b4b4"/><line x1="856.7" y1="569.0" x2="852.8" y2="571.2" stroke="#b4b4b4" stroke-width="1.2"/><polygon points="852.9,566.4 855.0,568.0 849.8,569.2" fill="#b4b4b4"/><line x1="853.9" y1="567.2" x2="849.8" y2="569.2" stroke="#b4b4b4" stroke-width="1.2"/><polygon points="850.6,564.5 852.5,566.3 847.1,567.0" fill="#b4b4b4"/><line x1="851.5" y1="565.4" x2="847.1" y2="567.0" stroke="#b4b4b4" stroke-width="1.2"/><polygon points="848.7,562.4 850.4,564.4 845.0,564.8" fill="#e6e6e6"/><line x1="849.6" y1="563.4" x2="845.0" y2="564.8" stroke="#e6e6e6" stroke-width="1.2"/><polygon points="847.3,560.3 848.7,562.5 843.2,562.4" fill="#e6e6e6"/><line x1="848.0" y1="561.4" x2="843.2" y2="562.4" stroke="#e6e6e6" stroke-width="1.2"/><polygon points="846.4,558.1 847.4,560.5 842.0,560.0" fill="#e6e6e6"/><line x1="846.9" y1="559.3" x2="842.0" y2="560.0" stroke="#e6e6e6" stroke-width="1.2"/><polygon points="846.0,555.9 846.5,558.4 841.3,557.5" fill="#e6e6e6"/><line x1="846.2" y1="557.2" x2="841.3" y2="557.5" stroke="#e6e6e6" stroke-width="1.2"/><polygon points="846.0,553.7 846.0,556.3 841.0,555.0" fill="#e6e6e6"/><line x1="846.0" y1="555.0" x2="841.0" y2="555.0" stroke="#e6e6e6" stroke-width="1.2"/><polygon points="846.5,551.6 846.0,554.1 841.3,552.5" fill="#e6e6e6"/><line x1="846.2" y1="552.8" x2="841.3" y2="552.5" stroke="#e6e6e6" stroke-width="1.2"/><polygon points="847.4,549.5 846.4,551.9 842.0,550.0" fill="#e6e6e6"/><line x1="846.9" y1="550.7" x2="842.0" y2="550.0" stroke="#e6e6e6" stroke-width="1.2"/><polygon points="848.7,547.5 847.3,549.7 843.2,547.6" fill="#e6e6e6"/><line x1="848.0" y1="548.6" x2="843.2" y2="547.6" stroke="#e6e6e6" stroke-width="1.2"/><polygon points="850.4,545.6 848.7,547.6 845.0,545.2" fill="#e6e6e6"/><line x1="849.6" y1="546.6" x2="845.0" y2="545.2" stroke="#e6e6e6" stroke-width="1.2"/><polygon points="852.5,543.7 850.6,545.5 847.1,543.0" fill="#e6e6e6"/><line x1="851.5" y1="544.6" x2="847.1" y2="543.0" stroke="#e6e6e6" stroke-width="1.2"/><polygon points="855.0,542.0 852.9,543.6 849.8,540.8" fill="#e6e6e6"/><line x1="853.9" y1="542.8" x2="849.8" y2="540.8" stroke="#e6e6e6" stroke-width="1.2"/><polygon points="857.8,540.4 855.6,541.7 852.8,538.8" fill="#f8f8f8"/><line x1="856.7" y1="541.0" x2="852.8" y2="538.8" stroke="#f8f8f8" stroke-width="1.2"/><polygon points="860.9,538.9 858.6,540.0 856.2,537.0" fill="#f8f8f8"/><line x1="859.8" y1="539.4" x2="856.2" y2="537.0" stroke="#f8f8f8" stroke-width="1.2"/><polygon points="864.4,537.5 862.0,538.5 860.0,535.3" fill="#f8f8f8"/><line x1="863.2" y1="538.0" x2="860.0" y2="535.3" stroke="#f8f8f8" stroke-width="1.2"/><polygon points="868.1,536.3 865.7,537.1 864.1,533.8" fill="#f8f8f8"/><line x1="866.9" y1="536.7" x2="864.1" y2="533.8" stroke="#f8f8f8" stroke-width="1.2"/><polygon points="872.1,535.3 869.6,535.9 868.5,532.5" fill="#f8f8f8"/><line x1="870.8" y1="535.6" x2="868.5" y2="532.5" stroke="#f8f8f8" stroke-width="1.2"/><polygon points="876.3,534.4 873.7,534.9 873.1,531.4" fill="#f8f8f8"/><line x1="875.0" y1="534.7" x2="873.1" y2="531.4" stroke="#f8f8f8" stroke-width="1.2"/><polygon points="880.6,533.8 878.1,534.1 877.9,530.6" fill="#f8f8f8"/><line x1="879.4" y1="533.9" x2="877.9" y2="530.6" stroke="#f8f8f8" stroke-width="1.2"/><polygon points="885.1,533.3 882.5,533.6 882.9,530.0" fill="#f8f8f8"/><line x1="883.8" y1="533.4" x2="882.9" y2="530.0" stroke="#f8f8f8" stroke-width="1.2"/><polygon points="889.7,533.0 887.1,533.2 887.9,529.6" fill="#f8f8f8"/><line x1="888.4" y1="533.1" x2="887.9" y2="529.6" stroke="#f8f8f8" stroke-width="1.2"/><polygon points="894.3,533.0 891.7,533.0 893.0,529.5" fill="#f8f8f8"/><line x1="893.0" y1="533.0" x2="893.0" y2="529.5" stroke="#f8f8f8" stroke-width="1.2"/><polygon points="898.9,533.2 896.3,533.0 898.1,529.6" fill="#f8f8f8"/><line x1="897.6" y1="533.1" x2="898.1" y2="529.6" stroke="#f8f8f8" stroke-width="1.2"/><polygon points="903.5,533.6 900.9,533.3 903.1,530.0" fill="#f8f8f8"/><line x1="902.2" y1="533.4" x2="903.1" y2="530.0" stroke="#f8f8f8" stroke-width="1.2"/><polygon points="907.9,534.1 905.4,533.8 908.1,530.6" fill="#f8f8f8"/><line x1="906.6" y1="533.9" x2="908.1" y2="530.6" stroke="#f8f8f8" stroke-width="1.2"/><polygon points="912.3,534.9 909.7,534.4 912.9,531.4" fill="#f8f8f8"/><line x1="911.0" y1="534.7" x2="912.9" y2="531.4" stroke="#f8f8f8" stroke-width="1.2"/><polygon points="916.4,535.9 913.9,535.3 917.5,532.5" fill="#f8f8f8"/><line x1="915.2" y1="535.6" x2="917.5" y2="532.5" stroke="#f8f8f8" stroke-width="1.2"/><polygon points="920.3,537.1 917.9,536.3 921.9,533.8" fill="#5a5a5a"/><line x1="919.1" y1="536.7" x2="921.9" y2="533.8" stroke="#5a5a5a" stroke-width="1.2"/><polygon points="924.0,538.5 921.6,537.5 926.0,535.3" fill="#5a5a5a"/><line x1="922.8" y1="538.0" x2="926.0" y2="535.3" stroke="#5a5a5a" stroke-width="1.2"/><polygon points="927.4,540.0 925.1,538.9 929.8,537.0" fill="#5a5a5a"/><line x1="926.2" y1="539.4" x2="929.8" y2="537.0" stroke="#5a5a5a" stroke-width="1.2"/><polygon points="930.4,541.7 928.2,540.4 933.2,538.8" fill="#5a5a5a"/><line x1="929.3" y1="541.0" x2="933.2" y2="538.8" stroke="#5a5a5a" stroke-width="1.2"/><polygon points="933.1,543.6 931.0,542.0 936.2,540.8" fill="#5a5a5a"/><line x1="932.1" y1="542.8" x2="936.2" y2="540.8" stroke="#5a5a5a" stroke-width="1.2"/><polygon points="935.4,545.5 933.5,543.7 938.9,543.0" fill="#5a5a5a"/><line x1="934.5" y1="544.6" x2="938.9" y2="543.0" stroke="#5a5a5a" stroke-width="1.2"/><polygon points="937.3,547.6 935.6,545.6 941.0,545.2" fill="#5a5a5a"/><line x1="936.4" y1="546.6" x2="941.0" y2="545.2" stroke="#5a5a5a" stroke-width="1.2"/><polygon points="938.7,549.7 937.3,547.5 942.8,547.6" fill="#5a5a5a"/><line x1="938.0" y1="548.6" x2="942.8" y2="547.6" stroke="#5a5a5a" stroke-width="1.2"/><polygon points="939.6,551.9 938.6,549.5 944.0,550.0" fill="#5a5a5a"/><line x1="939.1" y1="550.7" x2="944.0" y2="550.0" stroke="#5a5a5a" stroke-width="1.2"/><polygon points="940.0,554.1 939.5,551.6 944.7,552.5" fill="#5a5a5a"/><line x1="939.8" y1="552.8" x2="944.7" y2="552.5" stroke="#5a5a5a" stroke-width="1.2"/>
<g opacity="0.93">
<polygon points="862.5,514.4 886.2,496.9 922.5,509.4 898.8,526.2" fill="url(#cg)" stroke="none" stroke-width="1" />
<polygon points="862.5,514.4 898.8,526.2 898.8,566.2 862.5,555.0" fill="#a8a8a8" stroke="none" stroke-width="1" />
<polygon points="898.8,526.2 922.5,509.4 922.5,551.2 898.8,566.2" fill="#9c9c9c" stroke="none" stroke-width="1" />
</g>
<path d="M886.25 497 V538" stroke="#b4b4b4" stroke-width="1"/>
<g stroke="#fdfdfd" stroke-width="1.4" fill="none" stroke-linejoin="round"><path d="M862.5 514.4 L886.25 496.9 L922.5 509.4 L922.5 551.25 L898.75 566.25 L862.5 555 Z M862.5 514.4 L898.75 526.25 L922.5 509.4 M898.75 526.25 V566.25"/></g>
<path d="M913.5 536.3 L922.3 531.3 L922.3 540 Z" fill="#3cb83c"/>
<path d="M923.5 563.8 L939.8 568 L934.8 574.4 Z" fill="#e84848"/>
<g stroke="#7a7a7a" fill="none">
<circle cx="853.5" cy="607" r="3.8" stroke-width="1.8"/><path d="M856.5 610 L860.5 614" stroke-width="2.2"/>
<path d="M846.5 603.5 v-2.5 h2.5 M858.5 601 h2.5 v2.5 M846.5 612.5 v2.5 h2.5" stroke-width="1" stroke="#999"/>
</g>
<path d="M871.5 604 L877.7 600.8 L884 604 V612 L877.7 615.5 L871.5 612 Z" fill="#858585"/><path d="M871.5 604 L877.7 607.5 V615.5 L871.5 612 Z" fill="#f2f2f2"/><path d="M871.5 604 L877.7 600.8 L884 604 L877.7 607.5Z" fill="#9a9a9a"/>
<path d="M895 605.5 Q901.5 599 908 605.5 Q901.5 611 895 605.5Z" fill="#7a7a7a"/><circle cx="901.5" cy="604.5" r="1.8" fill="#e2e2e2"/>
<path d="M896 612.5 Q902 609 908 609.5" stroke="#7a7a7a" stroke-width="2.4" fill="none"/><path d="M894.5 612.5 L899 609 L899.5 615.5Z" fill="#7a7a7a"/>
<path d="M914.5 605.5 Q921 599 927.5 605.5 Q921 611 914.5 605.5Z" fill="#c4c4c4"/><circle cx="921" cy="604.5" r="1.8" fill="#e2e2e2"/>
<path d="M914.5 609.5 Q920.5 609 926 612.5" stroke="#c4c4c4" stroke-width="2.4" fill="none"/><path d="M927.5 612.5 L923 609 L922.5 615.5Z" fill="#c4c4c4"/>
<rect x="942.8" y="601.5" width="3.4" height="4" fill="#7a7a7a" transform="rotate(0 944.5 608.7)"/><rect x="942.8" y="601.5" width="3.4" height="4" fill="#7a7a7a" transform="rotate(60 944.5 608.7)"/><rect x="942.8" y="601.5" width="3.4" height="4" fill="#7a7a7a" transform="rotate(120 944.5 608.7)"/><rect x="942.8" y="601.5" width="3.4" height="4" fill="#7a7a7a" transform="rotate(180 944.5 608.7)"/><rect x="942.8" y="601.5" width="3.4" height="4" fill="#7a7a7a" transform="rotate(240 944.5 608.7)"/><rect x="942.8" y="601.5" width="3.4" height="4" fill="#7a7a7a" transform="rotate(300 944.5 608.7)"/>
<circle cx="944.5" cy="608.7" r="4.8" fill="#7a7a7a"/><circle cx="944.5" cy="608.7" r="2" fill="#e2e2e2"/></svg>
<div class="a" style="left:256px;top:620px;width:701px;height:15px;background:#e9e9e9;border-left:2px solid #6e6e6e"></div>
<div class="a" style="left:256px;top:635px;width:701px;height:6px;background:#d2d2d2"></div>
<div class="a" style="left:258px;top:621px;width:13px;height:14px;background:#c6c6c6;border-right:1px solid #cfcfcf;border-bottom:1px solid #cfcfcf"></div>
<svg class="a" style="left:258.5px;top:622px" width="12" height="12"><path d="M2 9l3-6h5l-3 6z" fill="#eee" stroke="#222"/><path d="M5 3l2 3" stroke="#222"/></svg>
<div class="a" style="left:271.7px;top:621px;width:13.300000000000011px;height:14px;background:#c6c6c6;border-right:1px solid #cfcfcf;border-bottom:1px solid #cfcfcf"></div>
<svg class="a" style="left:272.4px;top:622px" width="12" height="12"><path d="M2 9l3-6h5l-3 6z" fill="#e6e030" stroke="#222"/></svg>
<div class="a" style="left:288.4px;top:621px;width:12.600000000000023px;height:14px;background:#f4f4f4;border-right:1px solid #cfcfcf;border-bottom:1px solid #cfcfcf"></div>
<svg class="a" style="left:288.7px;top:622px" width="12" height="12"><path d="M2 10h8M6 3v5" stroke="#2233aa" stroke-width="1.2"/><path d="M3 10l3-4 3 4z" fill="#e6e030" stroke="#555"/><circle cx="6" cy="3" r="1.3" fill="#2233aa"/></svg>
<div class="a" style="left:303px;top:621px;width:13.5px;height:14px;background:#f4f4f4;border-right:1px solid #cfcfcf;border-bottom:1px solid #cfcfcf"></div>
<svg class="a" style="left:303.8px;top:622px" width="12" height="12"><path d="M1 1v10h10" stroke="#222" fill="none"/><path d="M3 10V7h2v3M6 10V5h2v5M9 10V3h2v7" fill="#e6e030" stroke="#222" stroke-width="0.6"/></svg>
<div class="a" style="left:317.5px;top:621px;width:12.5px;height:14px;background:#f4f4f4;border-right:1px solid #cfcfcf;border-bottom:1px solid #cfcfcf"></div>
<svg class="a" style="left:317.8px;top:622px" width="12" height="12"><path d="M2 1v10M2 11h8" stroke="#2233aa" fill="none"/><rect x="4" y="1.5" width="6" height="4" fill="#fff" stroke="#d22"/><path d="M2 8h5" stroke="#d22"/></svg>
<div class="a" style="left:334px;top:621px;width:12.699999999999989px;height:14px;background:#f4f4f4;border-right:1px solid #cfcfcf;border-bottom:1px solid #cfcfcf"></div>
<svg class="a" style="left:334.4px;top:622px" width="12" height="12"><text x="0" y="5" font-size="4.5" fill="#222" font-family="Liberation Sans" font-weight="bold">ABC</text><path d="M1 8h10" stroke="#2233aa" stroke-width="1.3"/><circle cx="6" cy="8" r="1.5" fill="#2233aa"/></svg>
<div class="a" style="left:348.8px;top:621px;width:12.5px;height:14px;background:#f4f4f4;border-right:1px solid #cfcfcf;border-bottom:1px solid #cfcfcf"></div>
<svg class="a" style="left:349.1px;top:622px" width="12" height="12"><text x="0" y="5" font-size="4.5" fill="#222" font-family="Liberation Sans" font-weight="bold">ABC</text><path d="M1 7h10l-1 3H0z" fill="#e6e030" stroke="#222"/></svg>
<div class="a" style="left:364.4px;top:621px;width:13.600000000000023px;height:14px;background:#f4f4f4;border-right:1px solid #cfcfcf;border-bottom:1px solid #cfcfcf"></div>
<svg class="a" style="left:365.2px;top:622px" width="12" height="12"><path d="M1 10l5-7 5 7" stroke="#888" stroke-dasharray="1,1" fill="none"/><path d="M6 3l5 3" stroke="#3c3"/><path d="M1 7h4" stroke="#d33"/></svg>
<div class="a" style="left:380px;top:621px;width:13.600000000000023px;height:14px;background:#f4f4f4;border-right:1px solid #cfcfcf;border-bottom:1px solid #cfcfcf"></div>
<svg class="a" style="left:380.8px;top:622px" width="12" height="12"><path d="M3 1v9M1 8l2 3 2-3" stroke="#222" fill="none"/><rect x="5" y="1" width="6" height="9" fill="#fff" stroke="#222"/><path d="M7 2v7M9 2v7" stroke="#222"/></svg>
<div class="a" style="left:397.75px;top:621px;width:12.25px;height:14px;background:#f4f4f4;border-right:1px solid #cfcfcf;border-bottom:1px solid #cfcfcf"></div>
<svg class="a" style="left:397.9px;top:622px" width="12" height="12"><rect x="1" y="3" width="8" height="8" fill="#e6e030" stroke="#222"/><rect x="4" y="1" width="7" height="6" fill="#3a5ac0"/><path d="M2 9l3-3" stroke="#222"/></svg>
<div class="a" style="left:412.3px;top:621px;width:12.5px;height:14px;background:#f4f4f4;border-right:1px solid #cfcfcf;border-bottom:1px solid #cfcfcf"></div>
<svg class="a" style="left:412.6px;top:622px" width="12" height="12"><rect x="1" y="3" width="8" height="8" fill="#fff" stroke="#8aa"/><rect x="4" y="1" width="7" height="6" fill="#8aa8e8"/><rect x="2" y="6" width="3" height="3" fill="#e6e030"/></svg>
<div class="a" style="left:427px;top:621px;width:13.5px;height:14px;background:#f4f4f4;border-right:1px solid #cfcfcf;border-bottom:1px solid #cfcfcf"></div>
<svg class="a" style="left:427.8px;top:622px" width="12" height="12"><rect x="1" y="1" width="10" height="10" fill="#fff" stroke="#d22"/><path d="M1 4h10M1 7h10M4 1v10M7 1v10" stroke="#d22" stroke-width="0.9"/><rect x="6" y="1" width="5" height="3" fill="#2233aa"/></svg>
<div class="a" style="left:259px;top:645px;font-size:9.2px;color:#555;line-height:12px">Befehlszeile</div>
<svg class="a" style="left:912px;top:646px" width="44" height="10"><path d="M2 2.5h7l-3.5 4z" fill="#555"/><path d="M22 1v5M20.5 1h3M20 6h5M22.5 6v3" stroke="#555"/><path d="M33 1.5l6 6M39 1.5l-6 6" stroke="#444" stroke-width="1.1"/></svg>
<div class="a" style="left:257px;top:662px;width:17px;height:18px;background:#f0f0f0;border-right:1px solid #d4d4d4"></div>
<svg class="a" style="left:260px;top:665px" width="12" height="13"><path d="M2 1v10l3-3 2 4 1.5-.8-2-4H10z" fill="#fff" stroke="#222" stroke-width="1"/></svg>
<div class="a" style="left:261px;top:684px;width:695px;height:17px;background:#fff;border-top:2px solid #222;border-left:2px solid #444"></div>
<div class="a" style="left:265px;top:687px;font-size:10px;color:#222;line-height:12px">Befehl &gt;</div>
<div class="a" style="left:618px;top:661px;width:338px;height:20px;background:#ececec"></div>
<svg class="a" style="left:624px;top:665px" width="12" height="12"><path d="M2 2l8 8" stroke="#777" stroke-width="1"/><circle cx="10" cy="10" r="1.3" fill="#d22"/></svg>
<svg class="a" style="left:639px;top:665px" width="12" height="12"><path d="M2 2l8 8" stroke="#444" stroke-width="1.1"/><circle cx="2" cy="2" r="1.3" fill="#d22"/><circle cx="10" cy="10" r="1.3" fill="#d22"/></svg>
<svg class="a" style="left:654px;top:665px" width="12" height="12"><circle cx="6" cy="6" r="3.5" fill="none" stroke="#555"/><circle cx="6" cy="6" r="1" fill="#d22"/></svg>
<svg class="a" style="left:669px;top:665px" width="12" height="12"><path d="M2 2l8 8M10 2l-8 8" stroke="#555" stroke-width="1.1"/></svg>
<svg class="a" style="left:690px;top:665px" width="12" height="12"><path d="M1 10l5-7 5 7" stroke="#444" fill="none"/><circle cx="6" cy="3" r="1.3" fill="#d22"/></svg>
<svg class="a" style="left:705px;top:665px" width="12" height="12"><path d="M1 10l5-7h5" stroke="#444" fill="none"/><circle cx="6" cy="3" r="1.3" fill="#d22"/></svg>
<svg class="a" style="left:720px;top:665px" width="12" height="12"><path d="M1 2h10l-5 9z" fill="none" stroke="#555"/><circle cx="6" cy="5" r="1.2" fill="#d22"/></svg>
<svg class="a" style="left:735px;top:665px" width="12" height="12"><path d="M1 10l9-5" stroke="#444"/><circle cx="10" cy="5" r="1.3" fill="#d22"/></svg>
<svg class="a" style="left:757px;top:665px" width="12" height="12"><path d="M2 1l9 9M5 3h5v5" stroke="#1a2a90" stroke-width="1.4" fill="none"/><circle cx="3" cy="9" r="1.5" fill="#d22"/></svg>
<svg class="a" style="left:775px;top:665px" width="12" height="12"><path d="M2 2h1M5 2h1M8 2h1M2 5h1M5 5h1M8 5h1M2 8h1M5 8h1M8 8h1" stroke="#222" stroke-width="1.6"/></svg>
<svg class="a" style="left:790px;top:665px" width="12" height="12"><path d="M1 10h10M3 10V3M6 10V5M9 10V2" stroke="#222"/><circle cx="6" cy="5" r="1.3" fill="#d22"/></svg>
<svg class="a" style="left:805px;top:665px" width="12" height="12"><path d="M1 10L11 2M2 3l8 7" stroke="#222"/><circle cx="6" cy="6" r="1.5" fill="#3c3"/></svg>
<div class="a" style="left:683px;top:663px;width:1px;height:16px;background:#d0d0d0"></div>
<div class="a" style="left:750px;top:663px;width:1px;height:16px;background:#d0d0d0"></div>
<div class="a" style="left:768px;top:663px;width:1px;height:16px;background:#d0d0d0"></div>
<div class="a" style="left:818.5px;top:663px;width:13px;height:16px;background:#cdcdcd"></div>
<svg class="a" style="left:820px;top:665px" width="12" height="12"><path d="M2 2l8 8" stroke="#222" stroke-width="1.3"/><circle cx="2" cy="2" r="1.5" fill="#d22"/></svg>
<div class="a" style="left:833.5px;top:663px;width:13px;height:16px;background:#cdcdcd"></div>
<svg class="a" style="left:835px;top:665px" width="12" height="12"><path d="M2 2l8 8" stroke="#222" stroke-width="1.3"/><circle cx="2" cy="2" r="1.5" fill="#d22"/></svg>
<div class="a" style="left:848.5px;top:663px;width:13px;height:16px;background:#cdcdcd"></div>
<svg class="a" style="left:850px;top:665px" width="12" height="12"><path d="M2 2l8 8M10 2l-8 8" stroke="#222" stroke-width="1.3"/><circle cx="6" cy="6" r="1.5" fill="#d22"/></svg>
<div class="a" style="left:863.5px;top:663px;width:13px;height:16px;background:#cdcdcd"></div>
<svg class="a" style="left:865px;top:665px" width="12" height="12"><path d="M2 2l4 8 4-8" stroke="#222" stroke-width="1.3" fill="none"/><circle cx="6" cy="9" r="1.5" fill="#d22"/></svg>
<svg class="a" style="left:880px;top:665px" width="12" height="12"><path d="M2 10Q2 2 10 2" stroke="#222" fill="none" stroke-width="1.2"/><circle cx="10" cy="2" r="1.3" fill="#d22"/></svg>
<svg class="a" style="left:895px;top:665px" width="12" height="12"><path d="M2 10h8V2" stroke="#222" fill="none" stroke-width="1.2"/><circle cx="2" cy="10" r="1.3" fill="#d22"/></svg>
<svg class="a" style="left:910px;top:665px" width="12" height="12"><path d="M2 10Q6 2 10 2" stroke="#222" fill="none" stroke-width="1.2"/><circle cx="6" cy="6" r="1.3" fill="#d22"/></svg>
<div class="a" style="left:923px;top:662px;width:16px;height:18px;background:#cacaca"></div>
<svg class="a" style="left:925px;top:665px" width="12" height="12"><rect x="1" y="5" width="10" height="5" fill="#e6e030" stroke="#222"/><path d="M3 5V3h6v2" stroke="#222" fill="none"/></svg>
<svg class="a" style="left:941px;top:665px" width="12" height="12"><rect x="4" y="2" width="6" height="9" rx="1" fill="#e6e030" stroke="#222"/><path d="M1 3v7" stroke="#222"/></svg>
<div class="a" style="left:2px;top:704px;width:86px;height:14px;background:#efefef;border-right:1px solid #a8a8a8;border-bottom:1px solid #a8a8a8;font-size:9.4px;line-height:13px;white-space:nowrap;overflow:hidden;color:#444;"></div>
<div class="a" style="left:89px;top:704px;width:84px;height:14px;background:#efefef;border-right:1px solid #a8a8a8;border-bottom:1px solid #a8a8a8;font-size:9.4px;line-height:13px;white-space:nowrap;overflow:hidden;color:#444;"></div>
<div class="a" style="left:174px;top:704px;width:25px;height:14px;background:#efefef;border-right:1px solid #a8a8a8;border-bottom:1px solid #a8a8a8;font-size:9.4px;line-height:13px;white-space:nowrap;overflow:hidden;color:#444;text-align:right;padding-right:4px">mm</div>
<div class="a" style="left:200px;top:704px;width:46px;height:14px;background:#efefef;border-right:1px solid #a8a8a8;border-bottom:1px solid #a8a8a8;font-size:9.4px;line-height:13px;white-space:nowrap;overflow:hidden;color:#444;padding-left:6px">Ebene XY</div>
<div class="a" style="left:250px;top:705px;font-size:9.4px;line-height:13px;color:#444">Bereit</div>
<div class="a" style="left:891px;top:705px;width:69px;height:13px;background:#5cc95c;font-size:9.8px;letter-spacing:-0.35px;line-height:13px;padding-left:6.5px;white-space:nowrap;overflow:hidden;color:#111">Neue Nachrichten</div>
<svg class="a" style="left:706px;top:73px" width="20" height="26"><rect x="2.5" y="2" width="5.5" height="5.5" fill="#ccc" stroke="#222" stroke-width="1.2"/><path d="M6.8 8 L6.8 22.5 L10 19.5 L12.5 24.5 L14.5 23.5 L12 18.5 L16 18.5 Z" fill="#fff" stroke="#111" stroke-width="1.1" stroke-linejoin="round"/></svg>
</body></html>
